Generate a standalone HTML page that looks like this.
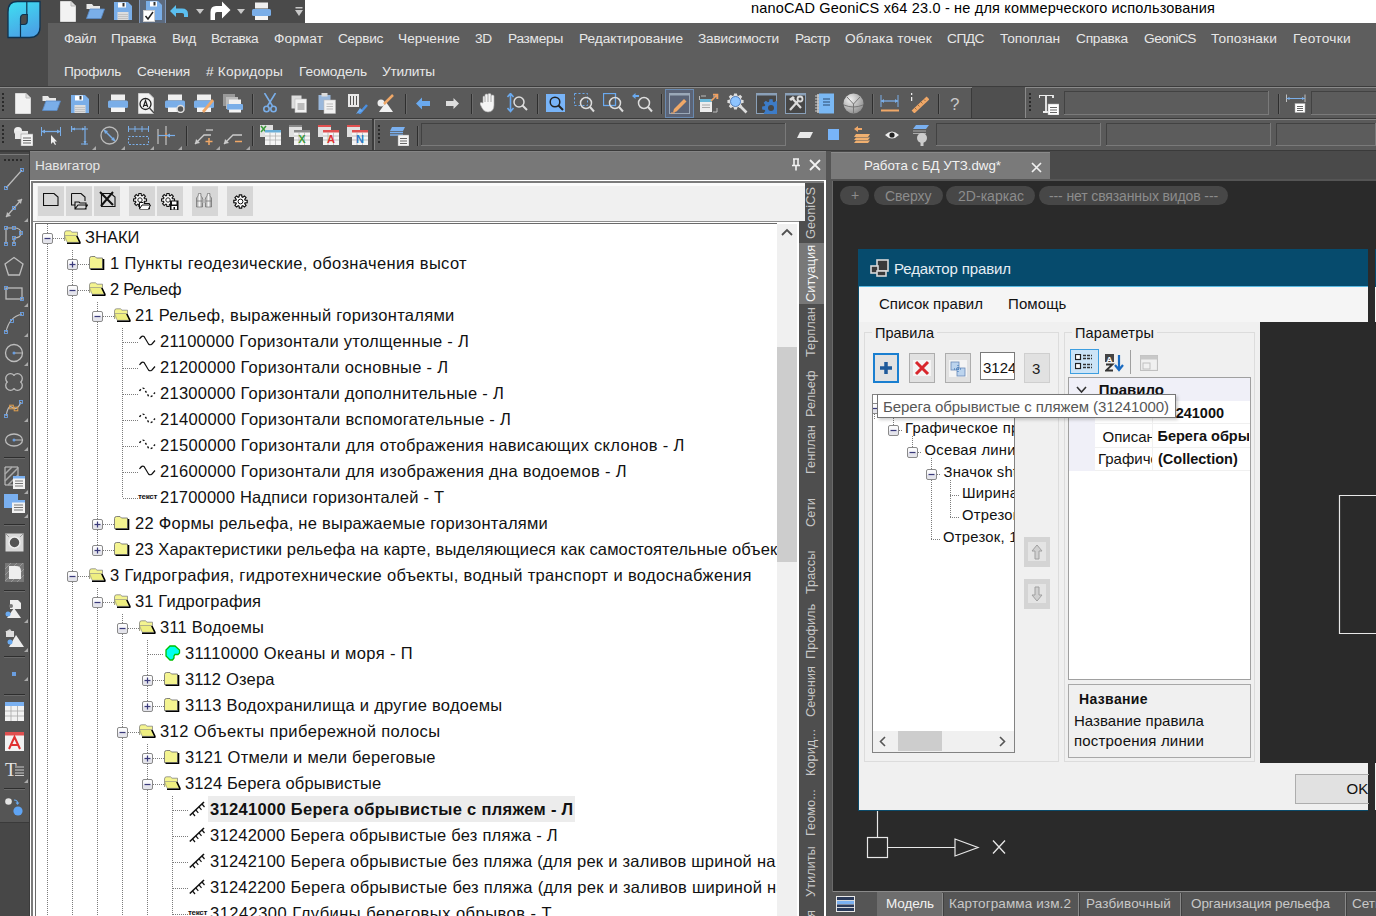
<!DOCTYPE html>
<html><head><meta charset="utf-8">
<style>
*{margin:0;padding:0;box-sizing:border-box}
body{width:1376px;height:916px;overflow:hidden;position:relative;background:#4a4a4a;font-family:'Liberation Sans',sans-serif}
.a{position:absolute}
.t{position:absolute;white-space:nowrap;line-height:1}
</style></head><body>
<div class="a" style="left:0px;top:0px;width:1376px;height:916px;background:#4a4a4a;"></div>
<div class="a" style="left:305px;top:0px;width:1071px;height:23px;background:#ffffff;"></div>
<div class="t" style="left:751px;top:0.53px;font-size:14.5px;color:#000;font-weight:normal;letter-spacing:0.179px;">nanoCAD GeoniCS x64 23.0 - не для коммерческого использования</div>
<svg class="a" style="left:7px;top:0px;" width="36" height="40" viewBox="0 0 36 40"><defs><linearGradient id="lg" x1="0" y1="0" x2="0.4" y2="1"><stop offset="0" stop-color="#3ee0f2"/><stop offset="1" stop-color="#4aa4e6"/></linearGradient></defs><path d="M1 12 Q1 1.5 10.5 1.5 H33 V27 Q33 37.5 22.5 37.5 H1 Z" fill="url(#lg)" stroke="#0e3350" stroke-width="1.3"/><path d="M19.8 1.5 V14.5 M13.5 24.5 V37.5" stroke="#0e3350" stroke-width="1.2"/><path d="M20.3 14.5 H16.8 Q13.5 14.5 13.5 18.5 V24.5 H17 Q20.3 24.5 20.3 20.5 Z" fill="#4b4b4b" stroke="#0e3350" stroke-width="1.2"/></svg>
<div class="a" style="left:48px;top:23px;width:1328px;height:63px;background:#5e5e5e;"></div>
<div class="a" style="left:0px;top:86px;width:1376px;height:1px;background:#3c3c3c;"></div>
<div class="t" style="left:64px;top:31.90px;font-size:13.7px;color:#e8e8e8;font-weight:normal;letter-spacing:-0.414px;">Файл</div>
<div class="t" style="left:111px;top:31.90px;font-size:13.7px;color:#e8e8e8;font-weight:normal;letter-spacing:-0.208px;">Правка</div>
<div class="t" style="left:172px;top:31.90px;font-size:13.7px;color:#e8e8e8;font-weight:normal;letter-spacing:-0.255px;">Вид</div>
<div class="t" style="left:211px;top:31.90px;font-size:13.7px;color:#e8e8e8;font-weight:normal;letter-spacing:-0.554px;">Вставка</div>
<div class="t" style="left:274px;top:31.90px;font-size:13.7px;color:#e8e8e8;font-weight:normal;letter-spacing:0.062px;">Формат</div>
<div class="t" style="left:338px;top:31.90px;font-size:13.7px;color:#e8e8e8;font-weight:normal;letter-spacing:-0.312px;">Сервис</div>
<div class="t" style="left:398px;top:31.90px;font-size:13.7px;color:#e8e8e8;font-weight:normal;letter-spacing:0.049px;">Черчение</div>
<div class="t" style="left:475px;top:31.90px;font-size:13.7px;color:#e8e8e8;font-weight:normal;letter-spacing:-0.250px;">3D</div>
<div class="t" style="left:508px;top:31.90px;font-size:13.7px;color:#e8e8e8;font-weight:normal;letter-spacing:-0.270px;">Размеры</div>
<div class="t" style="left:579px;top:31.90px;font-size:13.7px;color:#e8e8e8;font-weight:normal;letter-spacing:-0.020px;">Редактирование</div>
<div class="t" style="left:698px;top:31.90px;font-size:13.7px;color:#e8e8e8;font-weight:normal;letter-spacing:-0.189px;">Зависимости</div>
<div class="t" style="left:795px;top:31.90px;font-size:13.7px;color:#e8e8e8;font-weight:normal;letter-spacing:-0.403px;">Растр</div>
<div class="t" style="left:845px;top:31.90px;font-size:13.7px;color:#e8e8e8;font-weight:normal;letter-spacing:0.138px;">Облака точек</div>
<div class="t" style="left:947px;top:31.90px;font-size:13.7px;color:#e8e8e8;font-weight:normal;letter-spacing:-0.473px;">СПДС</div>
<div class="t" style="left:1000px;top:31.90px;font-size:13.7px;color:#e8e8e8;font-weight:normal;letter-spacing:-0.062px;">Топоплан</div>
<div class="t" style="left:1076px;top:31.90px;font-size:13.7px;color:#e8e8e8;font-weight:normal;letter-spacing:-0.243px;">Справка</div>
<div class="t" style="left:1144px;top:31.90px;font-size:13.7px;color:#e8e8e8;font-weight:normal;letter-spacing:-0.507px;">GeoniCS</div>
<div class="t" style="left:1211px;top:31.90px;font-size:13.7px;color:#e8e8e8;font-weight:normal;letter-spacing:0.127px;">Топознаки</div>
<div class="t" style="left:1293px;top:31.90px;font-size:13.7px;color:#e8e8e8;font-weight:normal;letter-spacing:0.297px;">Геоточки</div>
<div class="t" style="left:64px;top:64.70px;font-size:13.7px;color:#e8e8e8;font-weight:normal;letter-spacing:-0.299px;">Профиль</div>
<div class="t" style="left:137px;top:64.70px;font-size:13.7px;color:#e8e8e8;font-weight:normal;letter-spacing:-0.201px;">Сечения</div>
<div class="t" style="left:206px;top:64.70px;font-size:13.7px;color:#e8e8e8;font-weight:normal;letter-spacing:0.169px;"># Коридоры</div>
<div class="t" style="left:299px;top:64.70px;font-size:13.7px;color:#e8e8e8;font-weight:normal;letter-spacing:-0.080px;">Геомодель</div>
<div class="t" style="left:382px;top:64.70px;font-size:13.7px;color:#e8e8e8;font-weight:normal;letter-spacing:-0.194px;">Утилиты</div>
<svg class="a" style="left:60px;top:1px;" width="16" height="21" viewBox="0 0 16 21"><path d="M0.5 0.5 H11 L15.5 5 V20.5 H0.5 Z" fill="#f2f2f2" stroke="#d8d8d8"/><path d="M11 0.5 V5 H15.5" fill="#dcdcdc" stroke="#bbb"/></svg>
<svg class="a" style="left:86px;top:3px;" width="19" height="16" viewBox="0 0 19 16"><path d="M0.5 1 H6 L7.5 3 H14 V6 H0.5 Z" fill="#e8e8e8"/><path d="M4 6 H18.5 L15 15.5 H0.5 Z" fill="#7aaee8" stroke="#5a8cc8" stroke-width="0.8"/></svg>
<svg class="a" style="left:114px;top:2px;" width="18" height="18" viewBox="0 0 18 18"><path d="M0 0 H14 L18 4 V18 H0 Z" fill="#7aaee8"/><rect x="4" y="0.5" width="8" height="5" fill="#fff"/><rect x="8.5" y="1" width="2" height="3.5" fill="#333"/><rect x="3.5" y="10" width="11" height="8" fill="#ddd"/><path d="M4 12.5 H14 M4 14.5 H14 M4 16.5 H14" stroke="#bbb" stroke-width="0.8"/></svg>
<div class="a" style="left:139px;top:0px;width:27px;height:23px;background:#5c6a7e;"></div>
<div class="a" style="left:139px;top:0px;width:1px;height:23px;background:#7d95b8;"></div>
<div class="a" style="left:165px;top:0px;width:1px;height:23px;background:#7d95b8;"></div>
<svg class="a" style="left:143px;top:1px;" width="20" height="22" viewBox="0 0 20 22"><path d="M3 0 H15 L19 4 V19 H3 Z" fill="#7aaee8"/><rect x="7" y="0.5" width="7" height="5" fill="#fff"/><rect x="10.5" y="1" width="2" height="3.5" fill="#333"/><rect x="0.5" y="9.5" width="11" height="11" fill="#fff" stroke="#ccc"/><path d="M2.5 15 L5 18 L10 11" stroke="#222" stroke-width="1.5" fill="none"/></svg>
<svg class="a" style="left:170px;top:5px;" width="19" height="12" viewBox="0 0 19 12"><path d="M0 6 L6 0 V3.5 H12 Q18 3.5 18 9 V12 H14 V9.5 Q14 8 12 8 H6 V12 Z" fill="#5bbff0"/></svg>
<svg class="a" style="left:196px;top:9px;" width="8" height="5" viewBox="0 0 8 5"><path d="M0 0 H8 L4 5 Z" fill="#c8c8c8"/></svg>
<svg class="a" style="left:210px;top:1px;" width="21" height="20" viewBox="0 0 21 20"><path d="M20.5 9 L12 0.5 V5 H6 Q0.5 5 0.5 11 V19 H5 V13 Q5 11 7 11 H12 V17.5 Z" fill="#fff"/></svg>
<svg class="a" style="left:237px;top:9px;" width="8" height="5" viewBox="0 0 8 5"><path d="M0 0 H8 L4 5 Z" fill="#c8c8c8"/></svg>
<svg class="a" style="left:252px;top:2px;" width="19" height="19" viewBox="0 0 19 19"><rect x="3" y="0.5" width="13" height="6" fill="#efefef"/><rect x="0" y="7" width="19" height="7" rx="1.5" fill="#7aaee8"/><rect x="3" y="14" width="13" height="4" fill="#f4f4f4"/></svg>
<svg class="a" style="left:295px;top:7px;" width="8" height="10" viewBox="0 0 8 10"><rect x="0.5" y="0" width="7" height="1.5" fill="#c8c8c8"/><path d="M0 3 H8 L4 9 Z" fill="#c8c8c8"/></svg>
<div class="a" style="left:0px;top:87px;width:972px;height:31px;background:#5a5a5a;"></div>
<div class="a" style="left:0px;top:87px;width:972px;height:1px;background:#8a8a8a;"></div>
<div class="a" style="left:972px;top:87px;width:53px;height:31px;background:#4f4f4f;"></div>
<div class="a" style="left:971px;top:88px;width:1px;height:30px;background:#3a3a3a;"></div>
<div class="a" style="left:1025px;top:87px;width:351px;height:31px;background:#5a5a5a;"></div>
<div class="a" style="left:1025px;top:87px;width:351px;height:1px;background:#8a8a8a;"></div>
<div class="a" style="left:1025px;top:87px;width:1px;height:31px;background:#8a8a8a;"></div>
<div class="a" style="left:0px;top:118px;width:1376px;height:1px;background:#3a3a3a;"></div>
<div class="a" style="left:0px;top:119px;width:1376px;height:31px;background:#5a5a5a;"></div>
<div class="a" style="left:0px;top:119px;width:1376px;height:1px;background:#858585;"></div>
<div class="a" style="left:372px;top:119px;width:2px;height:31px;background:#3c3c3c;"></div>
<div class="a" style="left:374px;top:119px;width:1px;height:31px;background:#858585;"></div>
<div class="a" style="left:0px;top:150px;width:1376px;height:2px;background:#3a3a3a;"></div>
<div class="a" style="left:2px;top:93px;width:2px;height:2px;background:#2a2a2a"></div><div class="a" style="left:2px;top:97px;width:2px;height:2px;background:#2a2a2a"></div><div class="a" style="left:2px;top:101px;width:2px;height:2px;background:#2a2a2a"></div><div class="a" style="left:2px;top:105px;width:2px;height:2px;background:#2a2a2a"></div><div class="a" style="left:2px;top:109px;width:2px;height:2px;background:#2a2a2a"></div>
<div class="a" style="left:1029px;top:93px;width:2px;height:2px;background:#2a2a2a"></div><div class="a" style="left:1029px;top:97px;width:2px;height:2px;background:#2a2a2a"></div><div class="a" style="left:1029px;top:101px;width:2px;height:2px;background:#2a2a2a"></div><div class="a" style="left:1029px;top:105px;width:2px;height:2px;background:#2a2a2a"></div><div class="a" style="left:1029px;top:109px;width:2px;height:2px;background:#2a2a2a"></div>
<div class="a" style="left:2px;top:125px;width:2px;height:2px;background:#2a2a2a"></div><div class="a" style="left:2px;top:129px;width:2px;height:2px;background:#2a2a2a"></div><div class="a" style="left:2px;top:133px;width:2px;height:2px;background:#2a2a2a"></div><div class="a" style="left:2px;top:137px;width:2px;height:2px;background:#2a2a2a"></div><div class="a" style="left:2px;top:141px;width:2px;height:2px;background:#2a2a2a"></div>
<div class="a" style="left:378px;top:125px;width:2px;height:2px;background:#2a2a2a"></div><div class="a" style="left:378px;top:129px;width:2px;height:2px;background:#2a2a2a"></div><div class="a" style="left:378px;top:133px;width:2px;height:2px;background:#2a2a2a"></div><div class="a" style="left:378px;top:137px;width:2px;height:2px;background:#2a2a2a"></div><div class="a" style="left:378px;top:141px;width:2px;height:2px;background:#2a2a2a"></div>
<svg class="a" style="left:15px;top:93px;" width="16" height="21" viewBox="0 0 16 21"><path d="M0.5 0.5 H11 L15.5 5 V20.5 H0.5 Z" fill="#f2f2f2" stroke="#d8d8d8"/><path d="M11 0.5 V5 H15.5" fill="#dcdcdc" stroke="#bbb"/></svg>
<svg class="a" style="left:42px;top:95px;" width="19" height="16" viewBox="0 0 19 16"><path d="M0.5 1 H6 L7.5 3 H14 V6 H0.5 Z" fill="#e8e8e8"/><path d="M4 6 H18.5 L15 15.5 H0.5 Z" fill="#7aaee8" stroke="#5a8cc8" stroke-width="0.8"/></svg>
<svg class="a" style="left:71px;top:95px;" width="18" height="18" viewBox="0 0 18 18"><path d="M0 0 H14 L18 4 V18 H0 Z" fill="#7aaee8"/><rect x="4" y="0.5" width="8" height="5" fill="#fff"/><rect x="8.5" y="1" width="2" height="3.5" fill="#333"/><rect x="3.5" y="10" width="11" height="8" fill="#ddd"/><path d="M4 12.5 H14 M4 14.5 H14 M4 16.5 H14" stroke="#bbb" stroke-width="0.8"/></svg>
<div class="a" style="left:98px;top:94px;width:1px;height:20px;background:#2e2e2e;"></div>
<div class="a" style="left:99px;top:94px;width:1px;height:20px;background:#6a6a6a;"></div>
<svg class="a" style="left:108px;top:94px;" width="20" height="19" viewBox="0 0 20 19"><rect x="3" y="0.5" width="14" height="6" fill="#efefef"/><rect x="0" y="6.5" width="20" height="7.5" rx="1.5" fill="#7aaee8"/><rect x="3" y="13.5" width="14" height="4.5" fill="#f4f4f4"/></svg>
<svg class="a" style="left:138px;top:93px;" width="17" height="21" viewBox="0 0 17 21"><path d="M0.5 0.5 H11 L15.5 5 V20.5 H0.5 Z" fill="#f2f2f2" stroke="#ccc"/><circle cx="7.5" cy="11" r="5.5" fill="none" stroke="#222" stroke-width="1.3"/><path d="M5.3 14 L7.5 7.5 L9.7 14 M6 12.3 H9" stroke="#222" stroke-width="1.2" fill="none"/><path d="M11.5 15 L16 20" stroke="#444" stroke-width="1.3"/></svg>
<svg class="a" style="left:165px;top:94px;" width="20" height="19" viewBox="0 0 20 19"><rect x="3" y="0.5" width="14" height="6" fill="#efefef"/><rect x="0" y="6.5" width="20" height="7.5" rx="1.5" fill="#7aaee8"/><rect x="3" y="13.5" width="14" height="4.5" fill="#f4f4f4"/><circle cx="15.5" cy="15" r="3.5" fill="#555" stroke="#ddd" stroke-width="1.5"/></svg>
<svg class="a" style="left:194px;top:94px;" width="20" height="19" viewBox="0 0 20 19"><rect x="3" y="0.5" width="14" height="6" fill="#efefef"/><rect x="0" y="6.5" width="20" height="7.5" rx="1.5" fill="#7aaee8"/><rect x="3" y="13.5" width="14" height="4.5" fill="#f4f4f4"/><path d="M8 17 L18 5 L20 7 L10 19 Z" fill="#f0a868"/></svg>
<svg class="a" style="left:223px;top:94px;" width="20" height="20" viewBox="0 0 20 20"><rect x="0" y="0" width="12" height="12" fill="#999"/><rect x="3" y="3" width="12" height="12" fill="#bbb"/><rect x="6" y="5.5" width="12" height="5" fill="#efefef"/><rect x="4" y="10" width="16" height="6" rx="1" fill="#7aaee8"/><rect x="6" y="15.5" width="12" height="3" fill="#f4f4f4"/></svg>
<div class="a" style="left:252px;top:94px;width:1px;height:20px;background:#2e2e2e;"></div>
<div class="a" style="left:253px;top:94px;width:1px;height:20px;background:#6a6a6a;"></div>
<svg class="a" style="left:263px;top:93px;" width="14" height="20" viewBox="0 0 14 20"><path d="M1.5 0 L9.5 13 M12.5 0 L4.5 13" stroke="#7aaee8" stroke-width="1.6"/><circle cx="3.5" cy="16" r="2.7" fill="none" stroke="#7aaee8" stroke-width="1.6"/><circle cx="10.5" cy="16" r="2.7" fill="none" stroke="#7aaee8" stroke-width="1.6"/></svg>
<svg class="a" style="left:291px;top:95px;" width="16" height="18" viewBox="0 0 16 18"><rect x="0.5" y="0.5" width="10" height="13" fill="#ddd"/><rect x="4" y="4" width="11.5" height="13.5" fill="#f2f2f2" stroke="#bbb" stroke-width="0.6"/><rect x="6.5" y="8" width="7" height="7" fill="#bbb"/></svg>
<svg class="a" style="left:318px;top:93px;" width="18" height="21" viewBox="0 0 18 21"><rect x="0.5" y="2" width="12" height="15" fill="#9ab8dc"/><rect x="3.5" y="0" width="6" height="3.5" fill="#ddd"/><rect x="6" y="7" width="11.5" height="13.5" fill="#f2f2f2" stroke="#bbb" stroke-width="0.6"/><path d="M8.5 11 H15 M8.5 13.5 H15 M8.5 16 H15" stroke="#bbb"/></svg>
<svg class="a" style="left:348px;top:94px;" width="20" height="20" viewBox="0 0 20 20"><rect x="0" y="0" width="11" height="13" fill="#e8e8e8"/><path d="M2.5 2 V11 M5.5 2 V11 M8.5 2 V11" stroke="#555" stroke-width="1"/><path d="M11 20 L19 11" stroke="#4a8fe0" stroke-width="2.5"/><path d="M8 20 L12 14 L15 17 Z" fill="#6aaaf0"/></svg>
<svg class="a" style="left:377px;top:94px;" width="17" height="19" viewBox="0 0 17 19"><circle cx="4" cy="9" r="3.5" fill="#eee"/><path d="M2 18 L9 8 L16 18 Z" fill="#f2f2f2"/><path d="M7 10 L16 1" stroke="#f0a868" stroke-width="2.5"/></svg>
<div class="a" style="left:405px;top:94px;width:1px;height:20px;background:#2e2e2e;"></div>
<div class="a" style="left:406px;top:94px;width:1px;height:20px;background:#6a6a6a;"></div>
<svg class="a" style="left:416px;top:97px;" width="14" height="13" viewBox="0 0 14 13"><path d="M0 6.5 L6 0.5 V4 H14 V9 H6 V12.5 Z" fill="#6aaaf0"/></svg>
<svg class="a" style="left:446px;top:98px;" width="13" height="11" viewBox="0 0 13 11"><path d="M13 5.5 L7.5 0 V3 H0 V8 H7.5 V11 Z" fill="#ddd"/></svg>
<div class="a" style="left:471px;top:94px;width:1px;height:20px;background:#2e2e2e;"></div>
<div class="a" style="left:472px;top:94px;width:1px;height:20px;background:#6a6a6a;"></div>
<svg class="a" style="left:480px;top:93px;" width="17" height="20" viewBox="0 0 17 20"><path d="M3 10 V4 Q3 3 4 3 Q5 3 5 4 V9 V2 Q5 1 6.5 1 Q8 1 8 2 V9 V1.5 Q8 0.5 9.5 0.5 Q11 0.5 11 1.5 V9 V3 Q11 2 12.5 2 Q14 2 14 3 V12 Q14 19 8 19 Q4 19 2 15 L0 11 Q0 9 1.5 9.5 Z" fill="#f4f4f4" stroke="#aaa" stroke-width="0.6"/></svg>
<svg class="a" style="left:507px;top:93px;" width="21" height="20" viewBox="0 0 21 20"><path d="M3.5 1 V18 M0.5 4 L3.5 0.5 L6.5 4 M0.5 15 L3.5 18.5 L6.5 15" stroke="#6aaaf0" stroke-width="1.6" fill="none"/><circle cx="12" cy="9" r="5" fill="none" stroke="#ddd" stroke-width="1.5"/><path d="M15.5 12.5 L20 17" stroke="#ddd" stroke-width="2"/></svg>
<div class="a" style="left:537px;top:94px;width:1px;height:20px;background:#2e2e2e;"></div>
<div class="a" style="left:538px;top:94px;width:1px;height:20px;background:#6a6a6a;"></div>
<div class="a" style="left:546px;top:94px;width:19px;height:18px;background:#78b4f8;"></div>
<svg class="a" style="left:549px;top:96px;" width="15" height="15" viewBox="0 0 15 15"><circle cx="6" cy="6" r="4.8" fill="none" stroke="#222" stroke-width="1.5"/><path d="M9.5 9.5 L14 14" stroke="#222" stroke-width="2"/></svg>
<svg class="a" style="left:574px;top:93px;" width="21" height="21" viewBox="0 0 21 21"><rect x="0.5" y="0.5" width="13" height="12" fill="none" stroke="#6aaaf0" stroke-dasharray="2 2"/><circle cx="12" cy="10" r="5.5" fill="none" stroke="#ddd" stroke-width="1.5"/><path d="M16 14 L20 18.5" stroke="#ddd" stroke-width="2"/></svg>
<svg class="a" style="left:603px;top:93px;" width="21" height="21" viewBox="0 0 21 21"><rect x="0.5" y="0.5" width="12" height="12" fill="none" stroke="#6aaaf0" stroke-width="1.3"/><circle cx="12" cy="10" r="5.5" fill="none" stroke="#ddd" stroke-width="1.5"/><path d="M16 14 L20 18.5" stroke="#ddd" stroke-width="2"/></svg>
<svg class="a" style="left:632px;top:93px;" width="21" height="21" viewBox="0 0 21 21"><path d="M0 3 L3.5 0 V2 H7 V4 H3.5 V6 Z" fill="#6aaaf0"/><circle cx="12" cy="10" r="5.5" fill="none" stroke="#ddd" stroke-width="1.5"/><path d="M16 14 L20 18.5" stroke="#ddd" stroke-width="2"/></svg>
<div class="a" style="left:661px;top:94px;width:1px;height:20px;background:#2e2e2e;"></div>
<div class="a" style="left:662px;top:94px;width:1px;height:20px;background:#6a6a6a;"></div>
<div class="a" style="left:665px;top:89px;width:29px;height:29px;background:#5b6477;"></div>
<div class="a" style="left:665px;top:89px;width:29px;height:29px;border:1px solid #6a8ab0;"></div>
<svg class="a" style="left:668px;top:92px;" width="23" height="23" viewBox="0 0 23 23"><rect x="1.5" y="1.5" width="20" height="20" fill="none" stroke="#9aa8b8" stroke-width="1"/><rect x="1.5" y="1.5" width="20" height="2" fill="#9aa8b8"/><path d="M6 17 L16 7 L18.5 9.5 L8.5 19.5 L5 20.5 Z" fill="#f0a868"/><path d="M3 21 H7" stroke="#f0a868" stroke-width="1"/></svg>
<svg class="a" style="left:699px;top:93px;" width="20" height="21" viewBox="0 0 20 21"><path d="M2 3 H7 M0.5 3 V7 M14 3 H18 V6 M18 15 V19 H14" stroke="#bbb" stroke-width="1" fill="none"/><rect x="1" y="6" width="12" height="13" fill="#ededed"/><rect x="1" y="6" width="12" height="3" fill="#6ab8d8"/><path d="M3 12 H11 M3 14.5 H11" stroke="#aaa" stroke-width="1.2"/><path d="M12 8 L18 2 M14 1.5 H18.5 V6" stroke="#f0a060" stroke-width="1.6" fill="none"/></svg>
<svg class="a" style="left:727px;top:93px;" width="21" height="21" viewBox="0 0 21 21"><path d="M14.42,6.67 L16.58,7.11 L16.58,9.89 L14.42,10.33 L13.98,11.39 L15.20,13.23 L13.23,15.20 L11.39,13.98 L10.33,14.42 L9.89,16.58 L7.11,16.58 L6.67,14.42 L5.61,13.98 L3.77,15.20 L1.80,13.23 L3.02,11.39 L2.58,10.33 L0.42,9.89 L0.42,7.11 L2.58,6.67 L3.02,5.61 L1.80,3.77 L3.77,1.80 L5.61,3.02 L6.67,2.58 L7.11,0.42 L9.89,0.42 L10.33,2.58 L11.39,3.02 L13.23,1.80 L15.20,3.77 L13.98,5.61 Z" fill="#ddd"/><circle cx="8.5" cy="8.5" r="5" fill="#8ec4ff" stroke="#3a6ab0" stroke-width="0.8"/><path d="M13 13 L19.5 19.5" stroke="#ddd" stroke-width="2.6"/></svg>
<svg class="a" style="left:756px;top:93px;" width="21" height="21" viewBox="0 0 21 21"><rect x="0.5" y="0.5" width="20" height="20" fill="#474747" stroke="#8aa0b8" stroke-width="1"/><rect x="0.5" y="0.5" width="20" height="2" fill="#8aa0b8"/><path d="M21.21,13.08 L23.87,13.48 L23.87,16.52 L21.21,16.92 L20.75,18.03 L22.35,20.20 L20.20,22.35 L18.03,20.75 L16.92,21.21 L16.52,23.87 L13.48,23.87 L13.08,21.21 L11.97,20.75 L9.80,22.35 L7.65,20.20 L9.25,18.03 L8.79,16.92 L6.13,16.52 L6.13,13.48 L8.79,13.08 L9.25,11.97 L7.65,9.80 L9.80,7.65 L11.97,9.25 L13.08,8.79 L13.48,6.13 L16.52,6.13 L16.92,8.79 L18.03,9.25 L20.20,7.65 L22.35,9.80 L20.75,11.97 Z" fill="#3d7cc8"/><circle cx="15" cy="15" r="3" fill="#474747"/></svg>
<svg class="a" style="left:785px;top:93px;" width="21" height="21" viewBox="0 0 21 21"><rect x="0.5" y="0.5" width="20" height="20" fill="#474747" stroke="#8aa0b8" stroke-width="1"/><rect x="0.5" y="0.5" width="20" height="2" fill="#8aa0b8"/><path d="M5 17 L14 7 M7 5 L16 15" stroke="#ddd" stroke-width="2.2"/><path d="M4 6 L8 3 L10 5 L6 8 Z" fill="#ddd"/><circle cx="15" cy="6" r="2.5" fill="none" stroke="#ddd" stroke-width="1.8"/></svg>
<svg class="a" style="left:815px;top:93px;" width="19" height="21" viewBox="0 0 19 21"><rect x="4" y="0.5" width="15" height="20" fill="#7ab8f4"/><path d="M8 6 H15 M8 9 H15 M8 12 H15" stroke="#2a4a70" stroke-width="1.1"/><path d="M3 1 V20" stroke="#eee" stroke-width="1.2"/><path d="M0 3 H4 M0 6 H4 M0 9 H4 M0 12 H4 M0 15 H4 M0 18 H4" stroke="#ccc"/></svg>
<svg class="a" style="left:843px;top:93px;" width="21" height="21" viewBox="0 0 21 21"><defs><radialGradient id="sph" cx="0.35" cy="0.3" r="0.8"><stop offset="0" stop-color="#f0f0f0"/><stop offset="1" stop-color="#888"/></radialGradient></defs><circle cx="10.5" cy="10.5" r="10" fill="url(#sph)"/><path d="M4 4 L10.5 11 L17 4 M10.5 11 V20.5 M1 12 Q10.5 16 20 12" stroke="#777" stroke-width="1" fill="none"/></svg>
<div class="a" style="left:872px;top:94px;width:1px;height:20px;background:#2e2e2e;"></div>
<div class="a" style="left:873px;top:94px;width:1px;height:20px;background:#6a6a6a;"></div>
<svg class="a" style="left:880px;top:95px;" width="19" height="17" viewBox="0 0 19 17"><path d="M1 0 V12 M18 0 V12" stroke="#7aaee8" stroke-width="1"/><path d="M1 6 H18" stroke="#7aaee8" stroke-width="1.3"/><path d="M1 6 L4 4 V8 Z M18 6 L15 4 V8 Z" fill="#7aaee8"/><rect x="1" y="14.5" width="18" height="2" fill="#f0a868"/></svg>
<svg class="a" style="left:911px;top:93px;" width="18" height="20" viewBox="0 0 18 20"><path d="M0.5 0 V2 M0.5 4 V8" stroke="#eee" stroke-width="1.5"/><path d="M2 19 L17 5" stroke="#f0a868" stroke-width="4"/><path d="M4 15 L5.5 16.5 M7 12 L8.5 13.5 M10 9 L11.5 10.5 M13 6.5 L14.5 8" stroke="#8a6030" stroke-width="0.8"/></svg>
<div class="a" style="left:938px;top:94px;width:1px;height:20px;background:#2e2e2e;"></div>
<div class="a" style="left:939px;top:94px;width:1px;height:20px;background:#6a6a6a;"></div>
<div class="t" style="left:950px;top:96.11px;font-size:17px;color:#c8c8c8;font-weight:normal;">?</div>
<svg class="a" style="left:1039px;top:95px;" width="20" height="20" viewBox="0 0 20 20"><path d="M0 0 H14 M7 0 V17 M4 17 H10 M0 0 V3 M14 0 V3" stroke="#eee" stroke-width="1.8" fill="none"/><rect x="9" y="9" width="11" height="11" fill="#fff" stroke="#aaa" stroke-width="0.5"/><path d="M11 12.5 H18 M11 15 H18 M11 17.5 H18" stroke="#666"/></svg>
<div class="a" style="left:1064px;top:91px;width:205px;height:24px;background:#5c5c5c;"></div>
<div class="a" style="left:1064px;top:91px;width:205px;height:1px;background:#424242;"></div>
<div class="a" style="left:1064px;top:91px;width:1px;height:24px;background:#424242;"></div>
<div class="a" style="left:1064px;top:114px;width:205px;height:1px;background:#7a7a7a;"></div>
<div class="a" style="left:1268px;top:91px;width:1px;height:24px;background:#7a7a7a;"></div>
<div class="a" style="left:1278px;top:94px;width:1px;height:20px;background:#2e2e2e;"></div>
<div class="a" style="left:1279px;top:94px;width:1px;height:20px;background:#6a6a6a;"></div>
<svg class="a" style="left:1285px;top:94px;" width="22" height="20" viewBox="0 0 22 20"><path d="M1.5 0.5 V8 M20 0.5 V8" stroke="#ccc" stroke-width="0.9"/><path d="M1.5 4.5 H20" stroke="#7aaee8" stroke-width="1"/><path d="M1.5 4.5 L4.5 3 V6 Z M20 4.5 L17 3 V6 Z" fill="#7aaee8"/><rect x="10" y="9.5" width="10" height="9" fill="#fff" stroke="#aaa" stroke-width="0.5"/><path d="M12 12.5 H18 M12 14.5 H18 M12 16.5 H18" stroke="#666"/></svg>
<div class="a" style="left:1311px;top:91px;width:65px;height:24px;background:#5c5c5c;"></div>
<div class="a" style="left:1311px;top:91px;width:65px;height:1px;background:#424242;"></div>
<div class="a" style="left:1311px;top:91px;width:1px;height:24px;background:#424242;"></div>
<div class="a" style="left:1311px;top:114px;width:65px;height:1px;background:#7a7a7a;"></div>
<svg class="a" style="left:13px;top:126px;" width="20" height="20" viewBox="0 0 20 20"><circle cx="5" cy="5" r="4" fill="#eee"/><rect x="2" y="5" width="13" height="8" fill="#e8e8e8"/><rect x="8" y="8" width="12" height="12" fill="#f4f4f4" stroke="#999" stroke-width="0.6"/><path d="M10 12 H18 M10 14.5 H18 M10 17 H18" stroke="#666"/></svg>
<svg class="a" style="left:41px;top:127px;" width="20" height="18" viewBox="0 0 20 18"><path d="M0.5 0 V9 M19.5 0 V9" stroke="#7aaee8"/><path d="M0.5 4.5 H19.5" stroke="#7aaee8" stroke-width="1.3"/><path d="M0.5 4.5 L4 2.5 V6.5 Z M19.5 4.5 L16 2.5 V6.5 Z" fill="#7aaee8"/><path d="M10 8 V17 L12 15 L14 18 L15 17.5 L13.5 14.5 L16 14.5 Z" fill="#eee"/></svg>
<svg class="a" style="left:71px;top:126px;" width="18" height="19" viewBox="0 0 18 19"><path d="M0.5 0 V6 M0.5 3 H14 M14 0 V19 M10 3 H17 M10 18 H17" stroke="#7aaee8" stroke-width="1.2" fill="none"/><path d="M0.5 3 L4 1.5 V4.5 Z M14 3 L11 1.5 V4.5 Z M14 18 L12.5 15 H15.5 Z" fill="#7aaee8"/></svg>
<svg class="a" style="left:92px;top:146px;" width="4" height="4" viewBox="0 0 4 4"><path d="M4 0 V4 H0 Z" fill="#aaa"/></svg>
<svg class="a" style="left:100px;top:126px;" width="19" height="19" viewBox="0 0 19 19"><circle cx="9.5" cy="9.5" r="8.5" fill="none" stroke="#bbb" stroke-width="1.3"/><path d="M4 4 L15 15" stroke="#7aaee8" stroke-width="1.4"/><path d="M4 4 L8 5 L5 8 Z M15 15 L11 14 L14 11 Z" fill="#7aaee8"/></svg>
<svg class="a" style="left:121px;top:146px;" width="4" height="4" viewBox="0 0 4 4"><path d="M4 0 V4 H0 Z" fill="#aaa"/></svg>
<svg class="a" style="left:128px;top:126px;" width="21" height="19" viewBox="0 0 21 19"><path d="M0.5 0 V6 M20.5 0 V6 M7 0 V6 M14 0 V6 M0.5 3 H20.5" stroke="#7aaee8" stroke-width="1"/><rect x="0.5" y="10.5" width="20" height="8" fill="none" stroke="#7aaee8" stroke-dasharray="2 1.5"/></svg>
<svg class="a" style="left:150px;top:146px;" width="4" height="4" viewBox="0 0 4 4"><path d="M4 0 V4 H0 Z" fill="#aaa"/></svg>
<svg class="a" style="left:157px;top:126px;" width="19" height="19" viewBox="0 0 19 19"><path d="M1 3 V18 M9 0 V7 M9 12 V19" stroke="#bbb" stroke-width="1.3"/><path d="M9 7 V12" stroke="#f0a868" stroke-width="1.5"/><path d="M1 9.5 H18" stroke="#7aaee8" stroke-width="1.2"/><path d="M9 9.5 L13 7.5 V11.5 Z" fill="#7aaee8"/></svg>
<svg class="a" style="left:178px;top:146px;" width="4" height="4" viewBox="0 0 4 4"><path d="M4 0 V4 H0 Z" fill="#aaa"/></svg>
<div class="a" style="left:186px;top:126px;width:1px;height:20px;background:#2e2e2e;"></div>
<div class="a" style="left:187px;top:126px;width:1px;height:20px;background:#6a6a6a;"></div>
<svg class="a" style="left:194px;top:126px;" width="20" height="19" viewBox="0 0 20 19"><path d="M1 18 L10 9 H17" stroke="#ccc" stroke-width="1.3" fill="none"/><path d="M12 4 H19" stroke="#bbb" stroke-width="1.5"/><path d="M1 18 L2 13 L6 17 Z" fill="#ccc"/><path d="M15 12 V19 M11.5 15.5 H18.5" stroke="#f0a868" stroke-width="1.5"/></svg>
<svg class="a" style="left:216px;top:146px;" width="4" height="4" viewBox="0 0 4 4"><path d="M4 0 V4 H0 Z" fill="#aaa"/></svg>
<svg class="a" style="left:223px;top:126px;" width="20" height="19" viewBox="0 0 20 19"><path d="M1 18 L10 9 H19" stroke="#ccc" stroke-width="1.3" fill="none"/><path d="M1 18 L2 13 L6 17 Z" fill="#ccc"/><path d="M12 15.5 H19" stroke="#f0a868" stroke-width="1.5"/></svg>
<svg class="a" style="left:246px;top:146px;" width="4" height="4" viewBox="0 0 4 4"><path d="M4 0 V4 H0 Z" fill="#aaa"/></svg>
<div class="a" style="left:252px;top:126px;width:1px;height:20px;background:#2e2e2e;"></div>
<div class="a" style="left:253px;top:126px;width:1px;height:20px;background:#6a6a6a;"></div>
<svg class="a" style="left:260px;top:125px;" width="21" height="20" viewBox="0 0 21 20"><rect x="0" y="0" width="13" height="12" fill="#e0e0e0"/><path d="M1 1 L6 7 M6 1 L1 7" stroke="#3a9a3a" stroke-width="1.5"/><rect x="5" y="5" width="16" height="15" fill="#f4f4f4"/><rect x="5" y="5" width="16" height="2.5" fill="#6aaed8"/><path d="M5 11 H21 M5 15 H21 M10 7.5 V20 M15.5 7.5 V20" stroke="#aaa" stroke-width="0.7"/></svg>
<svg class="a" style="left:289px;top:125px;" width="21" height="20" viewBox="0 0 21 20"><rect x="0" y="0" width="13" height="12" fill="#e0e0e0"/><rect x="0" y="0" width="13" height="2" fill="#888"/><rect x="5" y="5" width="16" height="15" fill="#f4f4f4"/><rect x="5" y="5" width="16" height="2.5" fill="#888"/><path d="M5 11 H21 M5 15 H21 M10 7.5 V20 M15.5 7.5 V20" stroke="#aaa" stroke-width="0.7"/><text x="13" y="18" font-family="Liberation Sans" font-weight="bold" font-size="11" fill="#3a9a3a" text-anchor="middle">X</text></svg>
<svg class="a" style="left:318px;top:125px;" width="21" height="20" viewBox="0 0 21 20"><rect x="0" y="0" width="13" height="12" fill="#e0e0e0"/><rect x="0" y="0" width="13" height="2" fill="#e05050"/><rect x="5" y="5" width="16" height="15" fill="#f4f4f4"/><rect x="5" y="5" width="16" height="2.5" fill="#e05050"/><path d="M5 11 H21 M5 15 H21 M10 7.5 V20 M15.5 7.5 V20" stroke="#aaa" stroke-width="0.7"/><text x="13" y="18" font-family="Liberation Sans" font-weight="bold" font-size="11" fill="#e03030" text-anchor="middle">A</text></svg>
<svg class="a" style="left:347px;top:125px;" width="21" height="20" viewBox="0 0 21 20"><rect x="0" y="0" width="13" height="12" fill="#e0e0e0"/><rect x="0" y="0" width="13" height="2" fill="#e05050"/><rect x="5" y="5" width="16" height="15" fill="#f4f4f4"/><rect x="5" y="5" width="16" height="2.5" fill="#e05050"/><path d="M5 11 H21 M5 15 H21 M10 7.5 V20 M15.5 7.5 V20" stroke="#aaa" stroke-width="0.7"/><text x="13" y="18" font-family="Liberation Sans" font-weight="bold" font-size="11" fill="#2a7ac8" text-anchor="middle">N</text></svg>
<svg class="a" style="left:389px;top:125px;" width="20" height="21" viewBox="0 0 20 21"><path d="M3 2 L16 2 L14 6 L1 6 Z" fill="#7ab0f0"/><path d="M1 7.5 H14 M1 10 H14" stroke="#7ab0f0" stroke-width="1.3"/><rect x="9" y="10" width="11" height="11" fill="#f4f4f4" stroke="#999" stroke-width="0.5"/><path d="M11 13.5 H18 M11 16 H18 M11 18.5 H18" stroke="#666"/></svg>
<div class="a" style="left:417px;top:126px;width:1px;height:20px;background:#2e2e2e;"></div>
<div class="a" style="left:418px;top:126px;width:1px;height:20px;background:#6a6a6a;"></div>
<div class="a" style="left:421px;top:123px;width:365px;height:23px;background:#5c5c5c;"></div>
<div class="a" style="left:421px;top:123px;width:365px;height:1px;background:#424242;"></div>
<div class="a" style="left:421px;top:123px;width:1px;height:23px;background:#424242;"></div>
<div class="a" style="left:421px;top:145px;width:365px;height:1px;background:#7a7a7a;"></div>
<div class="a" style="left:785px;top:123px;width:1px;height:23px;background:#7a7a7a;"></div>
<svg class="a" style="left:797px;top:132px;" width="16" height="6" viewBox="0 0 16 6"><path d="M3 0 H16 L13 6 H0 Z" fill="#e8e8e8"/></svg>
<div class="a" style="left:828px;top:129px;width:11px;height:11px;background:#78b4f8;"></div>
<svg class="a" style="left:854px;top:126px;" width="17" height="17" viewBox="0 0 17 17"><path d="M0 3 L4 0 V2 H8 V4 H4 V6 Z" fill="#f0a868"/><path d="M2 8 H16 L14 11 H0 Z M2 11.5 H16 L14 14 H0 Z M2 14.5 H16 L14 17 H0 Z" fill="#f0b070"/></svg>
<svg class="a" style="left:885px;top:131px;" width="14" height="8" viewBox="0 0 14 8"><path d="M0 4 Q7 -3 14 4 Q7 11 0 4 Z" fill="#eee"/><circle cx="7" cy="4" r="2.6" fill="#222"/></svg>
<svg class="a" style="left:913px;top:125px;" width="16" height="21" viewBox="0 0 16 21"><path d="M3 0 H16 L13 4 H0 Z" fill="#7ab0f0"/><path d="M0 6 H13 M0 8.5 H13" stroke="#aaa" stroke-width="1.2"/><circle cx="9" cy="13" r="5" fill="#ccc"/><rect x="7.5" y="17" width="3" height="4" fill="#ccc"/></svg>
<div class="a" style="left:936px;top:123px;width:165px;height:23px;background:#5c5c5c;"></div>
<div class="a" style="left:936px;top:123px;width:165px;height:1px;background:#424242;"></div>
<div class="a" style="left:936px;top:123px;width:1px;height:23px;background:#424242;"></div>
<div class="a" style="left:936px;top:145px;width:165px;height:1px;background:#7a7a7a;"></div>
<div class="a" style="left:1100px;top:123px;width:1px;height:23px;background:#7a7a7a;"></div>
<div class="a" style="left:1106px;top:123px;width:165px;height:23px;background:#5c5c5c;"></div>
<div class="a" style="left:1106px;top:123px;width:165px;height:1px;background:#424242;"></div>
<div class="a" style="left:1106px;top:123px;width:1px;height:23px;background:#424242;"></div>
<div class="a" style="left:1106px;top:145px;width:165px;height:1px;background:#7a7a7a;"></div>
<div class="a" style="left:1270px;top:123px;width:1px;height:23px;background:#7a7a7a;"></div>
<div class="a" style="left:1276px;top:123px;width:100px;height:23px;background:#5c5c5c;"></div>
<div class="a" style="left:1276px;top:123px;width:100px;height:1px;background:#424242;"></div>
<div class="a" style="left:1276px;top:123px;width:1px;height:23px;background:#424242;"></div>
<div class="a" style="left:1276px;top:145px;width:100px;height:1px;background:#7a7a7a;"></div>
<div class="a" style="left:1375px;top:123px;width:1px;height:23px;background:#7a7a7a;"></div>
<div class="a" style="left:0px;top:152px;width:29px;height:764px;background:#474747;"></div>
<div class="a" style="left:0px;top:154px;width:29px;height:669px;background:#555555;"></div>
<div class="a" style="left:0px;top:154px;width:29px;height:1px;background:#7a7a7a;"></div>
<div class="a" style="left:29px;top:152px;width:1px;height:764px;background:#3a3a3a;"></div>
<div class="a" style="left:4px;top:159px;width:2px;height:2px;background:#2a2a2a"></div><div class="a" style="left:8px;top:159px;width:2px;height:2px;background:#2a2a2a"></div><div class="a" style="left:12px;top:159px;width:2px;height:2px;background:#2a2a2a"></div><div class="a" style="left:16px;top:159px;width:2px;height:2px;background:#2a2a2a"></div><div class="a" style="left:20px;top:159px;width:2px;height:2px;background:#2a2a2a"></div>
<svg class="a" style="left:4px;top:168px;" width="20" height="22" viewBox="0 0 20 22"><path d="M2 20 L18 2" stroke="#bdbdbd" stroke-width="1.2"/><rect x="0.5" y="18.5" width="3" height="3" fill="none" stroke="#6a9ee0" stroke-width="0.9"/><rect x="16.5" y="0.5" width="3" height="3" fill="none" stroke="#6a9ee0" stroke-width="0.9"/></svg>
<svg class="a" style="left:4px;top:197px;" width="20" height="22" viewBox="0 0 20 22"><path d="M2 20 L18 2" stroke="#bdbdbd" stroke-width="1.2"/><path d="M2 20 L3 15 L7 19 Z M18 2 L13 3 L17 7 Z" fill="#bdbdbd"/><rect x="8.5" y="9.5" width="3" height="3" fill="none" stroke="#6a9ee0" stroke-width="0.9"/></svg>
<svg class="a" style="left:24px;top:218px;" width="4" height="4" viewBox="0 0 4 4"><path d="M4 0 V4 H0 Z" fill="#aaa"/></svg>
<svg class="a" style="left:4px;top:225px;" width="20" height="22" viewBox="0 0 20 22"><path d="M2 3 V19 M2 3 H10 Q17 3 17 8 Q17 13 10 13 V19" stroke="#bdbdbd" stroke-width="1.2" fill="none"/><rect x="0.5" y="1.5" width="3" height="3" fill="none" stroke="#6a9ee0" stroke-width="0.9"/><rect x="8.5" y="1.5" width="3" height="3" fill="none" stroke="#6a9ee0" stroke-width="0.9"/><rect x="15.5" y="6.5" width="3" height="3" fill="none" stroke="#6a9ee0" stroke-width="0.9"/><rect x="8.5" y="11.5" width="3" height="3" fill="none" stroke="#6a9ee0" stroke-width="0.9"/><rect x="0.5" y="17.5" width="3" height="3" fill="none" stroke="#6a9ee0" stroke-width="0.9"/><rect x="8.5" y="17.5" width="3" height="3" fill="none" stroke="#6a9ee0" stroke-width="0.9"/></svg>
<svg class="a" style="left:4px;top:256px;" width="20" height="21" viewBox="0 0 20 21"><path d="M10 1.5 L19 8 L15.5 19 H4.5 L1 8 Z" fill="none" stroke="#bdbdbd" stroke-width="1.3"/></svg>
<svg class="a" style="left:4px;top:286px;" width="20" height="16" viewBox="0 0 20 16"><rect x="2" y="2" width="16" height="11" fill="none" stroke="#bdbdbd" stroke-width="1.3"/><rect x="0.5" y="0.5" width="3" height="3" fill="none" stroke="#6a9ee0" stroke-width="0.9"/><rect x="16.5" y="11.5" width="3" height="3" fill="none" stroke="#6a9ee0" stroke-width="0.9"/></svg>
<svg class="a" style="left:24px;top:303px;" width="4" height="4" viewBox="0 0 4 4"><path d="M4 0 V4 H0 Z" fill="#aaa"/></svg>
<svg class="a" style="left:4px;top:312px;" width="20" height="22" viewBox="0 0 20 22"><path d="M2 20 Q5 5 18 2" stroke="#bdbdbd" stroke-width="1.2" fill="none"/><rect x="0.5" y="18.5" width="3" height="3" fill="none" stroke="#6a9ee0" stroke-width="0.9"/><rect x="6.5" y="7.5" width="3" height="3" fill="none" stroke="#6a9ee0" stroke-width="0.9"/><rect x="16.5" y="0.5" width="3" height="3" fill="none" stroke="#6a9ee0" stroke-width="0.9"/></svg>
<svg class="a" style="left:24px;top:333px;" width="4" height="4" viewBox="0 0 4 4"><path d="M4 0 V4 H0 Z" fill="#aaa"/></svg>
<svg class="a" style="left:4px;top:343px;" width="20" height="20" viewBox="0 0 20 20"><circle cx="10" cy="10" r="8.5" fill="none" stroke="#bdbdbd" stroke-width="1.3"/><path d="M10 10 H18" stroke="#bdbdbd"/><circle cx="10" cy="10" r="1.5" fill="#6a9ee0"/></svg>
<svg class="a" style="left:24px;top:362px;" width="4" height="4" viewBox="0 0 4 4"><path d="M4 0 V4 H0 Z" fill="#aaa"/></svg>
<svg class="a" style="left:4px;top:372px;" width="20" height="20" viewBox="0 0 20 20"><g fill="none" stroke="#bdbdbd" stroke-width="1.3"><circle cx="6.5" cy="6.5" r="4.8"/><circle cx="13.5" cy="6.5" r="4.8"/><circle cx="13.5" cy="13.5" r="4.8"/><circle cx="6.5" cy="13.5" r="4.8"/></g><circle cx="10" cy="10" r="6.3" fill="#555"/></svg>
<svg class="a" style="left:4px;top:399px;" width="20" height="19" viewBox="0 0 20 19"><path d="M2 17 Q4 6 7.5 8 Q10 10 12 9.5 Q15 8 17 3" stroke="#bdbdbd" stroke-width="1.2" fill="none"/><rect x="0.5" y="15.5" width="3" height="3" fill="none" stroke="#6a9ee0" stroke-width="0.9"/><rect x="15.5" y="1.5" width="3" height="3" fill="none" stroke="#6a9ee0" stroke-width="0.9"/><rect x="5.7" y="6.2" width="3.6" height="3.6" fill="none" stroke="#e0a050"/><rect x="10.2" y="8.2" width="3.6" height="3.6" fill="none" stroke="#e0a050"/></svg>
<svg class="a" style="left:24px;top:418px;" width="4" height="4" viewBox="0 0 4 4"><path d="M4 0 V4 H0 Z" fill="#aaa"/></svg>
<svg class="a" style="left:4px;top:432px;" width="20" height="16" viewBox="0 0 20 16"><ellipse cx="10" cy="8" rx="8.5" ry="6" fill="none" stroke="#bdbdbd" stroke-width="1.3"/><path d="M10 8 H18" stroke="#bdbdbd"/><circle cx="10" cy="8" r="1.5" fill="#6a9ee0"/></svg>
<svg class="a" style="left:24px;top:447px;" width="4" height="4" viewBox="0 0 4 4"><path d="M4 0 V4 H0 Z" fill="#aaa"/></svg>
<div class="a" style="left:4px;top:457px;width:21px;height:1px;background:#2e2e2e;"></div>
<div class="a" style="left:4px;top:458px;width:21px;height:1px;background:#6a6a6a;"></div>
<svg class="a" style="left:4px;top:466px;" width="21" height="24" viewBox="0 0 21 24"><path d="M1 1 H14 V19 H1 Z" fill="none" stroke="#ccc"/><path d="M1 8 L8 1 M1 15 L14 2 M4 19 L14 9" stroke="#aaa" stroke-width="1.5"/><rect x="9" y="10" width="12" height="13" fill="#f2f2f2"/><rect x="9" y="10" width="12" height="2.5" fill="#7ab0f0"/><path d="M11 15 H19 M11 17.5 H19 M11 20 H19" stroke="#777"/></svg>
<svg class="a" style="left:24px;top:490px;" width="4" height="4" viewBox="0 0 4 4"><path d="M4 0 V4 H0 Z" fill="#aaa"/></svg>
<svg class="a" style="left:4px;top:494px;" width="21" height="20" viewBox="0 0 21 20"><rect x="0" y="0" width="14" height="14" fill="#7ab0f0"/><rect x="8" y="6" width="13" height="13" fill="#f2f2f2"/><rect x="8" y="6" width="13" height="2.5" fill="#7ab0f0"/><path d="M10 11 H19 M10 13.5 H19 M10 16 H19" stroke="#777"/></svg>
<svg class="a" style="left:24px;top:514px;" width="4" height="4" viewBox="0 0 4 4"><path d="M4 0 V4 H0 Z" fill="#aaa"/></svg>
<div class="a" style="left:4px;top:524px;width:21px;height:1px;background:#2e2e2e;"></div>
<div class="a" style="left:4px;top:525px;width:21px;height:1px;background:#6a6a6a;"></div>
<svg class="a" style="left:5px;top:533px;" width="19" height="19" viewBox="0 0 19 19"><rect x="0.5" y="0.5" width="18" height="18" fill="#d8d8d8"/><path d="M0.5 0.5 L4 4 M18.5 0.5 L15 4" stroke="#999"/><circle cx="9.5" cy="9.5" r="5.5" fill="#555" stroke="#eee" stroke-width="1.5"/></svg>
<svg class="a" style="left:5px;top:563px;" width="19" height="19" viewBox="0 0 19 19"><rect x="0" y="0" width="19" height="19" fill="#777"/><path d="M0 6 L6 0 M0 12 L12 0 M0 18 L18 0 M6 19 L19 6 M12 19 L19 12" stroke="#999"/><path d="M4 3 H11 Q16 3 16 8 V16 H4 Z" fill="#eee"/></svg>
<div class="a" style="left:4px;top:590px;width:21px;height:1px;background:#2e2e2e;"></div>
<div class="a" style="left:4px;top:591px;width:21px;height:1px;background:#6a6a6a;"></div>
<svg class="a" style="left:4px;top:599px;" width="21" height="20" viewBox="0 0 21 20"><path d="M6 1 H14 L17 4 V10 H6 Z" fill="#eee"/><path d="M3 19 L10 9 L17 19 Z" fill="#eee"/><circle cx="4" cy="15" r="2.5" fill="#6aaaf0"/><circle cx="7" cy="7" r="2" fill="#777"/></svg>
<svg class="a" style="left:24px;top:619px;" width="4" height="4" viewBox="0 0 4 4"><path d="M4 0 V4 H0 Z" fill="#aaa"/></svg>
<svg class="a" style="left:4px;top:629px;" width="21" height="19" viewBox="0 0 21 19"><path d="M1 3 L6 0 L9 4 Z" fill="#ccc"/><path d="M5 18 L12 6 L20 18 Z" fill="#eee"/><circle cx="6" cy="13" r="2.5" fill="#6aaaf0"/><rect x="2" y="2" width="8" height="6" fill="#ddd"/></svg>
<svg class="a" style="left:24px;top:648px;" width="4" height="4" viewBox="0 0 4 4"><path d="M4 0 V4 H0 Z" fill="#aaa"/></svg>
<div class="a" style="left:4px;top:656px;width:21px;height:1px;background:#2e2e2e;"></div>
<div class="a" style="left:4px;top:657px;width:21px;height:1px;background:#6a6a6a;"></div>
<div class="a" style="left:12px;top:672px;width:4px;height:4px;background:#6a9ee0;"></div>
<svg class="a" style="left:24px;top:677px;" width="4" height="4" viewBox="0 0 4 4"><path d="M4 0 V4 H0 Z" fill="#aaa"/></svg>
<div class="a" style="left:4px;top:694px;width:21px;height:1px;background:#2e2e2e;"></div>
<div class="a" style="left:4px;top:695px;width:21px;height:1px;background:#6a6a6a;"></div>
<svg class="a" style="left:5px;top:702px;" width="19" height="19" viewBox="0 0 19 19"><rect x="0" y="0" width="19" height="19" fill="#f2f2f2"/><rect x="0" y="0" width="19" height="4" fill="#7ab0f0"/><path d="M0 9 H19 M0 14 H19 M6 4 V19 M12.5 4 V19" stroke="#aaa" stroke-width="0.8"/></svg>
<svg class="a" style="left:5px;top:732px;" width="19" height="19" viewBox="0 0 19 19"><rect x="0" y="0" width="19" height="19" fill="#f2f2f2"/><rect x="0" y="0" width="19" height="3.5" fill="#e05050"/><path d="M4 17 L9.5 5 L15 17 M6 13 H13" stroke="#e03030" stroke-width="2" fill="none"/></svg>
<div class="t" style="left:5px;top:759.92px;font-size:19px;color:#e6e6e6;font-weight:normal;font-family:'Liberation Serif',serif">T</div>
<svg class="a" style="left:15px;top:766px;" width="9" height="10" viewBox="0 0 9 10"><path d="M0 1 H9 M0 4 H9 M0 7 H9 M0 9.5 H9" stroke="#ccc" stroke-width="1"/></svg>
<svg class="a" style="left:24px;top:779px;" width="4" height="4" viewBox="0 0 4 4"><path d="M4 0 V4 H0 Z" fill="#aaa"/></svg>
<div class="a" style="left:4px;top:788px;width:21px;height:1px;background:#2e2e2e;"></div>
<div class="a" style="left:4px;top:789px;width:21px;height:1px;background:#6a6a6a;"></div>
<svg class="a" style="left:4px;top:797px;" width="22" height="22" viewBox="0 0 22 22"><circle cx="4.5" cy="4.5" r="3.3" fill="#e4e4e4"/><path d="M10 3 Q13.5 3 13.5 6" stroke="#6aaaf0" stroke-width="1.2" fill="none"/><path d="M11.5 5.5 H15.5 L13.5 8 Z" fill="#6aaaf0"/><circle cx="14" cy="14" r="4.6" fill="#5fa4f4"/></svg>
<div class="a" style="left:0px;top:822px;width:29px;height:1px;background:#3a3a3a;"></div>
<div class="a" style="left:30px;top:151px;width:796px;height:29px;background:#787878;"></div>
<div class="a" style="left:30px;top:151px;width:796px;height:1px;background:#858585;"></div>
<div class="t" style="left:35px;top:158.50px;font-size:13.7px;color:#e6e6e6;font-weight:normal;letter-spacing:-0.085px;">Навигатор</div>
<svg class="a" style="left:791px;top:158px;" width="10" height="13" viewBox="0 0 10 13"><path d="M2 1 H8 M3 1 V7 M7 1 V7 M1 7.5 H9 M5 8 V12.5" stroke="#f2f2f2" stroke-width="1.6" fill="none"/></svg>
<svg class="a" style="left:809px;top:159px;" width="12" height="12" viewBox="0 0 12 12"><path d="M1 1 L11 11 M11 1 L1 11" stroke="#f2f2f2" stroke-width="1.8"/></svg>
<div class="a" style="left:30px;top:180px;width:796px;height:736px;background:#ffffff;"></div>
<div class="a" style="left:31px;top:181px;width:2px;height:735px;background:#7a7a7a;"></div>
<div class="a" style="left:31px;top:181px;width:795px;height:2px;background:#7a7a7a;"></div>
<div class="a" style="left:33px;top:183px;width:791px;height:733px;background:#ffffff;"></div>
<div class="a" style="left:33px;top:183px;width:766px;height:38px;background:#f0f0f0;"></div>
<div class="a" style="left:33px;top:183px;width:766px;height:3px;background:#fafafa;"></div>
<div class="a" style="left:33px;top:183px;width:4px;height:38px;background:#f8f8f8;"></div>
<div class="a" style="left:33px;top:221px;width:766px;height:1px;background:#8f8f8f;"></div>
<div class="a" style="left:33px;top:222px;width:766px;height:1px;background:#ffffff;"></div>
<div class="a" style="left:38px;top:186px;width:26px;height:30px;background:#d6d6d6;"></div>
<div class="a" style="left:38px;top:186px;width:26px;height:1px;background:#dcdcdc;"></div>
<div class="a" style="left:66px;top:186px;width:26px;height:30px;background:#d6d6d6;"></div>
<div class="a" style="left:66px;top:186px;width:26px;height:1px;background:#dcdcdc;"></div>
<div class="a" style="left:94px;top:186px;width:26px;height:30px;background:#d6d6d6;"></div>
<div class="a" style="left:94px;top:186px;width:26px;height:1px;background:#dcdcdc;"></div>
<div class="a" style="left:129px;top:186px;width:26px;height:30px;background:#d6d6d6;"></div>
<div class="a" style="left:129px;top:186px;width:26px;height:1px;background:#dcdcdc;"></div>
<div class="a" style="left:157px;top:186px;width:26px;height:30px;background:#d6d6d6;"></div>
<div class="a" style="left:157px;top:186px;width:26px;height:1px;background:#dcdcdc;"></div>
<div class="a" style="left:192px;top:186px;width:26px;height:30px;background:#d6d6d6;"></div>
<div class="a" style="left:192px;top:186px;width:26px;height:1px;background:#dcdcdc;"></div>
<div class="a" style="left:227px;top:186px;width:26px;height:30px;background:#d6d6d6;"></div>
<div class="a" style="left:227px;top:186px;width:26px;height:1px;background:#dcdcdc;"></div>
<svg class="a" style="left:43px;top:193px;" width="16" height="14" viewBox="0 0 16 14"><path d="M0.5 0.5 H11 L15 4 V12.5 H0.5 Z" fill="none" stroke="#111" stroke-width="1.1"/></svg>
<svg class="a" style="left:71px;top:193px;" width="17" height="17" viewBox="0 0 17 17"><path d="M0.5 0.5 H10 L14 4 V8 M0.5 0.5 V12 H4" fill="none" stroke="#111" stroke-width="1.1"/><path d="M4 9 H8 L9 10 H15 V16 H4 Z M4 16 L7 12 H16.5 L14 16" fill="none" stroke="#111" stroke-width="1.1"/></svg>
<svg class="a" style="left:99px;top:191px;" width="17" height="17" viewBox="0 0 17 17"><path d="M2.5 2.5 H12 L16 6 V15.5 H2.5 Z" fill="none" stroke="#111" stroke-width="1.1"/><path d="M1 1 L14 14 M14 1 L2 15" stroke="#111" stroke-width="2"/></svg>
<svg class="a" style="left:133px;top:193px;" width="18" height="17" viewBox="0 0 18 17"><path d="M11.39,5.64 L13.50,5.88 L13.50,8.12 L11.39,8.36 L11.07,9.15 L12.39,10.81 L10.81,12.39 L9.15,11.07 L8.36,11.39 L8.12,13.50 L5.88,13.50 L5.64,11.39 L4.85,11.07 L3.19,12.39 L1.61,10.81 L2.93,9.15 L2.61,8.36 L0.50,8.12 L0.50,5.88 L2.61,5.64 L2.93,4.85 L1.61,3.19 L3.19,1.61 L4.85,2.93 L5.64,2.61 L5.88,0.50 L8.12,0.50 L8.36,2.61 L9.15,2.93 L10.81,1.61 L12.39,3.19 L11.07,4.85 Z" fill="#fff" stroke="#111" stroke-width="1.1"/><circle cx="7" cy="7" r="2.2" fill="none" stroke="#111" stroke-width="0.9"/><path d="M6.5 9.5 H10 L11 10.5 H16.5 V16 H6.5 Z" fill="#fff" stroke="#111" stroke-width="1"/><path d="M6.5 16 L9 12 H17.5 L15.5 16" fill="#fff" stroke="#111" stroke-width="1"/></svg>
<svg class="a" style="left:161px;top:193px;" width="18" height="17" viewBox="0 0 18 17"><path d="M11.39,5.64 L13.50,5.88 L13.50,8.12 L11.39,8.36 L11.07,9.15 L12.39,10.81 L10.81,12.39 L9.15,11.07 L8.36,11.39 L8.12,13.50 L5.88,13.50 L5.64,11.39 L4.85,11.07 L3.19,12.39 L1.61,10.81 L2.93,9.15 L2.61,8.36 L0.50,8.12 L0.50,5.88 L2.61,5.64 L2.93,4.85 L1.61,3.19 L3.19,1.61 L4.85,2.93 L5.64,2.61 L5.88,0.50 L8.12,0.50 L8.36,2.61 L9.15,2.93 L10.81,1.61 L12.39,3.19 L11.07,4.85 Z" fill="#fff" stroke="#111" stroke-width="1.1"/><circle cx="7" cy="7" r="2.2" fill="none" stroke="#111" stroke-width="0.9"/><rect x="9" y="7.5" width="8.5" height="9.5" fill="#111"/><rect x="11" y="8.5" width="4.5" height="3" fill="#fff"/><rect x="10.5" y="13" width="5.5" height="3.5" fill="#fff"/><rect x="12.5" y="14" width="1.5" height="2.5" fill="#111"/></svg>
<svg class="a" style="left:196px;top:193px;" width="17" height="15" viewBox="0 0 17 15"><defs><linearGradient id="bn" x1="0" y1="0" x2="1" y2="0"><stop offset="0" stop-color="#999"/><stop offset="0.5" stop-color="#f4f4f4"/><stop offset="1" stop-color="#888"/></linearGradient></defs><path d="M2.5 0.5 H5 V3 L6.5 5 V14 H0.5 V5 L2 3 Z" fill="url(#bn)" stroke="#666" stroke-width="0.6"/><path d="M11.5 0.5 H14 V3 L15.5 5 V14 H9.5 V5 L11 3 Z" fill="url(#bn)" stroke="#666" stroke-width="0.6"/><path d="M0.5 8 H6.5 M9.5 8 H15.5" stroke="#777" stroke-width="0.8"/><rect x="6.5" y="6" width="3" height="4" fill="#bbb"/></svg>
<svg class="a" style="left:233px;top:194px;" width="15" height="15" viewBox="0 0 15 15"><path d="M12.09,6.08 L14.20,6.35 L14.20,8.65 L12.09,8.92 L11.75,9.74 L13.05,11.43 L11.43,13.05 L9.74,11.75 L8.92,12.09 L8.65,14.20 L6.35,14.20 L6.08,12.09 L5.26,11.75 L3.57,13.05 L1.95,11.43 L3.25,9.74 L2.91,8.92 L0.80,8.65 L0.80,6.35 L2.91,6.08 L3.25,5.26 L1.95,3.57 L3.57,1.95 L5.26,3.25 L6.08,2.91 L6.35,0.80 L8.65,0.80 L8.92,2.91 L9.74,3.25 L11.43,1.95 L13.05,3.57 L11.75,5.26 Z" fill="#fff" stroke="#111" stroke-width="1.2"/><circle cx="7.5" cy="7.5" r="2.4" fill="none" stroke="#111" stroke-width="1"/></svg>
<div class="a" style="left:35px;top:223px;width:742px;height:1px;background:#6a6a6a;"></div>
<div class="a" style="left:35px;top:223px;width:1px;height:693px;background:#6a6a6a;"></div>
<div class="a" style="left:36px;top:224px;width:741px;height:692px;background:#ffffff;"></div>
<div class="a" style="left:777px;top:224px;width:20px;height:692px;background:#f0f0f0;"></div>
<div class="a" style="left:797px;top:224px;width:2px;height:692px;background:#ffffff;"></div>
<svg class="a" style="left:781px;top:228px;" width="12" height="8" viewBox="0 0 12 8"><path d="M1 7 L6 2 L11 7" stroke="#505050" stroke-width="1.8" fill="none"/></svg>
<div class="a" style="left:777px;top:347px;width:20px;height:215px;background:#cdcdcd;"></div>
<div class="a" style="left:799px;top:183px;width:25px;height:733px;background:#4e4e4e;"></div>
<div class="a" style="left:824px;top:181px;width:2px;height:735px;background:#ffffff;"></div>
<div class="a" style="left:799px;top:243px;width:25px;height:61px;background:#787878;"></div>
<div class="a" style="left:799px;top:183px;width:6px;height:38px;background:#f0f0f0;"></div>
<div class="a" style="left:799px;top:183px;width:6px;height:3px;background:#fafafa;"></div>
<div class="t" style="left:805px;top:239.4px;font-size:12.8px;color:#c8c8c8;transform-origin:0 0;transform:rotate(-90deg);width:62px">GeoniCS</div>
<div class="t" style="left:805px;top:301.6px;font-size:12.8px;color:#f4f4f4;transform-origin:0 0;transform:rotate(-90deg);width:67px">Ситуация</div>
<div class="t" style="left:805px;top:357px;font-size:12.8px;color:#c8c8c8;transform-origin:0 0;transform:rotate(-90deg);width:60px">Терплан</div>
<div class="t" style="left:805px;top:417px;font-size:12.8px;color:#c8c8c8;transform-origin:0 0;transform:rotate(-90deg);width:57px">Рельеф</div>
<div class="t" style="left:805px;top:474px;font-size:12.8px;color:#c8c8c8;transform-origin:0 0;transform:rotate(-90deg);width:59px">Генплан</div>
<div class="t" style="left:805px;top:527px;font-size:12.8px;color:#c8c8c8;transform-origin:0 0;transform:rotate(-90deg);width:39px">Сети</div>
<div class="t" style="left:805px;top:594px;font-size:12.8px;color:#c8c8c8;transform-origin:0 0;transform:rotate(-90deg);width:54px">Трассы</div>
<div class="t" style="left:805px;top:659px;font-size:12.8px;color:#c8c8c8;transform-origin:0 0;transform:rotate(-90deg);width:66px">Профиль</div>
<div class="t" style="left:805px;top:717px;font-size:12.8px;color:#c8c8c8;transform-origin:0 0;transform:rotate(-90deg);width:62px">Сечения</div>
<div class="t" style="left:805px;top:776px;font-size:12.8px;color:#c8c8c8;transform-origin:0 0;transform:rotate(-90deg);width:58px">Корид...</div>
<div class="t" style="left:805px;top:836px;font-size:12.8px;color:#c8c8c8;transform-origin:0 0;transform:rotate(-90deg);width:58px">Геомо...</div>
<div class="t" style="left:805px;top:897px;font-size:12.8px;color:#c8c8c8;transform-origin:0 0;transform:rotate(-90deg);width:62px">Утилиты</div>
<div class="t" style="left:805px;top:917px;font-size:12.8px;color:#c8c8c8;transform-origin:0 0;transform:rotate(-90deg);width:18px">я</div>
<div class="a" style="left:36px;top:224px;width:741px;height:692px;overflow:hidden">
<div class="a" style="left:11px;top:0px;width:1px;height:9px;background:repeating-linear-gradient(to bottom,#7c7c7c 0 1px,transparent 1px 2px)"></div>
<div class="a" style="left:11px;top:20px;width:1px;height:6px;background:repeating-linear-gradient(to bottom,#7c7c7c 0 1px,transparent 1px 2px)"></div>
<div class="a" style="left:17px;top:14px;width:11px;height:1px;background:repeating-linear-gradient(to right,#7c7c7c 0 1px,transparent 1px 2px)"></div>
<div class="a" style="left:36px;top:26px;width:1px;height:9px;background:repeating-linear-gradient(to bottom,#7c7c7c 0 1px,transparent 1px 2px)"></div>
<div class="a" style="left:36px;top:46px;width:1px;height:6px;background:repeating-linear-gradient(to bottom,#7c7c7c 0 1px,transparent 1px 2px)"></div>
<div class="a" style="left:42px;top:40px;width:11px;height:1px;background:repeating-linear-gradient(to right,#7c7c7c 0 1px,transparent 1px 2px)"></div>
<div class="a" style="left:36px;top:52px;width:1px;height:9px;background:repeating-linear-gradient(to bottom,#7c7c7c 0 1px,transparent 1px 2px)"></div>
<div class="a" style="left:36px;top:72px;width:1px;height:6px;background:repeating-linear-gradient(to bottom,#7c7c7c 0 1px,transparent 1px 2px)"></div>
<div class="a" style="left:42px;top:66px;width:11px;height:1px;background:repeating-linear-gradient(to right,#7c7c7c 0 1px,transparent 1px 2px)"></div>
<div class="a" style="left:61px;top:78px;width:1px;height:9px;background:repeating-linear-gradient(to bottom,#7c7c7c 0 1px,transparent 1px 2px)"></div>
<div class="a" style="left:61px;top:98px;width:1px;height:6px;background:repeating-linear-gradient(to bottom,#7c7c7c 0 1px,transparent 1px 2px)"></div>
<div class="a" style="left:67px;top:92px;width:11px;height:1px;background:repeating-linear-gradient(to right,#7c7c7c 0 1px,transparent 1px 2px)"></div>
<div class="a" style="left:86px;top:104px;width:1px;height:26px;background:repeating-linear-gradient(to bottom,#7c7c7c 0 1px,transparent 1px 2px)"></div>
<div class="a" style="left:87px;top:118px;width:16px;height:1px;background:repeating-linear-gradient(to right,#7c7c7c 0 1px,transparent 1px 2px)"></div>
<div class="a" style="left:86px;top:130px;width:1px;height:26px;background:repeating-linear-gradient(to bottom,#7c7c7c 0 1px,transparent 1px 2px)"></div>
<div class="a" style="left:87px;top:144px;width:16px;height:1px;background:repeating-linear-gradient(to right,#7c7c7c 0 1px,transparent 1px 2px)"></div>
<div class="a" style="left:86px;top:156px;width:1px;height:26px;background:repeating-linear-gradient(to bottom,#7c7c7c 0 1px,transparent 1px 2px)"></div>
<div class="a" style="left:87px;top:170px;width:16px;height:1px;background:repeating-linear-gradient(to right,#7c7c7c 0 1px,transparent 1px 2px)"></div>
<div class="a" style="left:86px;top:182px;width:1px;height:26px;background:repeating-linear-gradient(to bottom,#7c7c7c 0 1px,transparent 1px 2px)"></div>
<div class="a" style="left:87px;top:196px;width:16px;height:1px;background:repeating-linear-gradient(to right,#7c7c7c 0 1px,transparent 1px 2px)"></div>
<div class="a" style="left:86px;top:208px;width:1px;height:26px;background:repeating-linear-gradient(to bottom,#7c7c7c 0 1px,transparent 1px 2px)"></div>
<div class="a" style="left:87px;top:222px;width:16px;height:1px;background:repeating-linear-gradient(to right,#7c7c7c 0 1px,transparent 1px 2px)"></div>
<div class="a" style="left:86px;top:234px;width:1px;height:26px;background:repeating-linear-gradient(to bottom,#7c7c7c 0 1px,transparent 1px 2px)"></div>
<div class="a" style="left:87px;top:248px;width:16px;height:1px;background:repeating-linear-gradient(to right,#7c7c7c 0 1px,transparent 1px 2px)"></div>
<div class="a" style="left:86px;top:260px;width:1px;height:14px;background:repeating-linear-gradient(to bottom,#7c7c7c 0 1px,transparent 1px 2px)"></div>
<div class="a" style="left:87px;top:274px;width:16px;height:1px;background:repeating-linear-gradient(to right,#7c7c7c 0 1px,transparent 1px 2px)"></div>
<div class="a" style="left:61px;top:286px;width:1px;height:9px;background:repeating-linear-gradient(to bottom,#7c7c7c 0 1px,transparent 1px 2px)"></div>
<div class="a" style="left:61px;top:306px;width:1px;height:6px;background:repeating-linear-gradient(to bottom,#7c7c7c 0 1px,transparent 1px 2px)"></div>
<div class="a" style="left:67px;top:300px;width:11px;height:1px;background:repeating-linear-gradient(to right,#7c7c7c 0 1px,transparent 1px 2px)"></div>
<div class="a" style="left:61px;top:312px;width:1px;height:9px;background:repeating-linear-gradient(to bottom,#7c7c7c 0 1px,transparent 1px 2px)"></div>
<div class="a" style="left:67px;top:326px;width:11px;height:1px;background:repeating-linear-gradient(to right,#7c7c7c 0 1px,transparent 1px 2px)"></div>
<div class="a" style="left:36px;top:338px;width:1px;height:9px;background:repeating-linear-gradient(to bottom,#7c7c7c 0 1px,transparent 1px 2px)"></div>
<div class="a" style="left:36px;top:358px;width:1px;height:6px;background:repeating-linear-gradient(to bottom,#7c7c7c 0 1px,transparent 1px 2px)"></div>
<div class="a" style="left:42px;top:352px;width:11px;height:1px;background:repeating-linear-gradient(to right,#7c7c7c 0 1px,transparent 1px 2px)"></div>
<div class="a" style="left:61px;top:364px;width:1px;height:9px;background:repeating-linear-gradient(to bottom,#7c7c7c 0 1px,transparent 1px 2px)"></div>
<div class="a" style="left:61px;top:384px;width:1px;height:6px;background:repeating-linear-gradient(to bottom,#7c7c7c 0 1px,transparent 1px 2px)"></div>
<div class="a" style="left:67px;top:378px;width:11px;height:1px;background:repeating-linear-gradient(to right,#7c7c7c 0 1px,transparent 1px 2px)"></div>
<div class="a" style="left:86px;top:390px;width:1px;height:9px;background:repeating-linear-gradient(to bottom,#7c7c7c 0 1px,transparent 1px 2px)"></div>
<div class="a" style="left:86px;top:410px;width:1px;height:6px;background:repeating-linear-gradient(to bottom,#7c7c7c 0 1px,transparent 1px 2px)"></div>
<div class="a" style="left:92px;top:404px;width:11px;height:1px;background:repeating-linear-gradient(to right,#7c7c7c 0 1px,transparent 1px 2px)"></div>
<div class="a" style="left:111px;top:416px;width:1px;height:26px;background:repeating-linear-gradient(to bottom,#7c7c7c 0 1px,transparent 1px 2px)"></div>
<div class="a" style="left:112px;top:430px;width:16px;height:1px;background:repeating-linear-gradient(to right,#7c7c7c 0 1px,transparent 1px 2px)"></div>
<div class="a" style="left:111px;top:442px;width:1px;height:9px;background:repeating-linear-gradient(to bottom,#7c7c7c 0 1px,transparent 1px 2px)"></div>
<div class="a" style="left:111px;top:462px;width:1px;height:6px;background:repeating-linear-gradient(to bottom,#7c7c7c 0 1px,transparent 1px 2px)"></div>
<div class="a" style="left:117px;top:456px;width:11px;height:1px;background:repeating-linear-gradient(to right,#7c7c7c 0 1px,transparent 1px 2px)"></div>
<div class="a" style="left:111px;top:468px;width:1px;height:9px;background:repeating-linear-gradient(to bottom,#7c7c7c 0 1px,transparent 1px 2px)"></div>
<div class="a" style="left:117px;top:482px;width:11px;height:1px;background:repeating-linear-gradient(to right,#7c7c7c 0 1px,transparent 1px 2px)"></div>
<div class="a" style="left:86px;top:494px;width:1px;height:9px;background:repeating-linear-gradient(to bottom,#7c7c7c 0 1px,transparent 1px 2px)"></div>
<div class="a" style="left:86px;top:514px;width:1px;height:6px;background:repeating-linear-gradient(to bottom,#7c7c7c 0 1px,transparent 1px 2px)"></div>
<div class="a" style="left:92px;top:508px;width:11px;height:1px;background:repeating-linear-gradient(to right,#7c7c7c 0 1px,transparent 1px 2px)"></div>
<div class="a" style="left:111px;top:520px;width:1px;height:9px;background:repeating-linear-gradient(to bottom,#7c7c7c 0 1px,transparent 1px 2px)"></div>
<div class="a" style="left:111px;top:540px;width:1px;height:6px;background:repeating-linear-gradient(to bottom,#7c7c7c 0 1px,transparent 1px 2px)"></div>
<div class="a" style="left:117px;top:534px;width:11px;height:1px;background:repeating-linear-gradient(to right,#7c7c7c 0 1px,transparent 1px 2px)"></div>
<div class="a" style="left:111px;top:546px;width:1px;height:9px;background:repeating-linear-gradient(to bottom,#7c7c7c 0 1px,transparent 1px 2px)"></div>
<div class="a" style="left:111px;top:566px;width:1px;height:6px;background:repeating-linear-gradient(to bottom,#7c7c7c 0 1px,transparent 1px 2px)"></div>
<div class="a" style="left:117px;top:560px;width:11px;height:1px;background:repeating-linear-gradient(to right,#7c7c7c 0 1px,transparent 1px 2px)"></div>
<div class="a" style="left:136px;top:572px;width:1px;height:26px;background:repeating-linear-gradient(to bottom,#7c7c7c 0 1px,transparent 1px 2px)"></div>
<div class="a" style="left:137px;top:586px;width:16px;height:1px;background:repeating-linear-gradient(to right,#7c7c7c 0 1px,transparent 1px 2px)"></div>
<div class="a" style="left:136px;top:598px;width:1px;height:26px;background:repeating-linear-gradient(to bottom,#7c7c7c 0 1px,transparent 1px 2px)"></div>
<div class="a" style="left:137px;top:612px;width:16px;height:1px;background:repeating-linear-gradient(to right,#7c7c7c 0 1px,transparent 1px 2px)"></div>
<div class="a" style="left:136px;top:624px;width:1px;height:26px;background:repeating-linear-gradient(to bottom,#7c7c7c 0 1px,transparent 1px 2px)"></div>
<div class="a" style="left:137px;top:638px;width:16px;height:1px;background:repeating-linear-gradient(to right,#7c7c7c 0 1px,transparent 1px 2px)"></div>
<div class="a" style="left:136px;top:650px;width:1px;height:26px;background:repeating-linear-gradient(to bottom,#7c7c7c 0 1px,transparent 1px 2px)"></div>
<div class="a" style="left:137px;top:664px;width:16px;height:1px;background:repeating-linear-gradient(to right,#7c7c7c 0 1px,transparent 1px 2px)"></div>
<div class="a" style="left:136px;top:676px;width:1px;height:26px;background:repeating-linear-gradient(to bottom,#7c7c7c 0 1px,transparent 1px 2px)"></div>
<div class="a" style="left:137px;top:690px;width:16px;height:1px;background:repeating-linear-gradient(to right,#7c7c7c 0 1px,transparent 1px 2px)"></div>
<div class="a" style="left:11px;top:26px;width:1px;height:26px;background:repeating-linear-gradient(to bottom,#7c7c7c 0 1px,transparent 1px 2px)"></div>
<div class="a" style="left:11px;top:52px;width:1px;height:26px;background:repeating-linear-gradient(to bottom,#7c7c7c 0 1px,transparent 1px 2px)"></div>
<div class="a" style="left:11px;top:78px;width:1px;height:26px;background:repeating-linear-gradient(to bottom,#7c7c7c 0 1px,transparent 1px 2px)"></div>
<div class="a" style="left:36px;top:78px;width:1px;height:26px;background:repeating-linear-gradient(to bottom,#7c7c7c 0 1px,transparent 1px 2px)"></div>
<div class="a" style="left:11px;top:104px;width:1px;height:26px;background:repeating-linear-gradient(to bottom,#7c7c7c 0 1px,transparent 1px 2px)"></div>
<div class="a" style="left:36px;top:104px;width:1px;height:26px;background:repeating-linear-gradient(to bottom,#7c7c7c 0 1px,transparent 1px 2px)"></div>
<div class="a" style="left:61px;top:104px;width:1px;height:26px;background:repeating-linear-gradient(to bottom,#7c7c7c 0 1px,transparent 1px 2px)"></div>
<div class="a" style="left:11px;top:130px;width:1px;height:26px;background:repeating-linear-gradient(to bottom,#7c7c7c 0 1px,transparent 1px 2px)"></div>
<div class="a" style="left:36px;top:130px;width:1px;height:26px;background:repeating-linear-gradient(to bottom,#7c7c7c 0 1px,transparent 1px 2px)"></div>
<div class="a" style="left:61px;top:130px;width:1px;height:26px;background:repeating-linear-gradient(to bottom,#7c7c7c 0 1px,transparent 1px 2px)"></div>
<div class="a" style="left:11px;top:156px;width:1px;height:26px;background:repeating-linear-gradient(to bottom,#7c7c7c 0 1px,transparent 1px 2px)"></div>
<div class="a" style="left:36px;top:156px;width:1px;height:26px;background:repeating-linear-gradient(to bottom,#7c7c7c 0 1px,transparent 1px 2px)"></div>
<div class="a" style="left:61px;top:156px;width:1px;height:26px;background:repeating-linear-gradient(to bottom,#7c7c7c 0 1px,transparent 1px 2px)"></div>
<div class="a" style="left:11px;top:182px;width:1px;height:26px;background:repeating-linear-gradient(to bottom,#7c7c7c 0 1px,transparent 1px 2px)"></div>
<div class="a" style="left:36px;top:182px;width:1px;height:26px;background:repeating-linear-gradient(to bottom,#7c7c7c 0 1px,transparent 1px 2px)"></div>
<div class="a" style="left:61px;top:182px;width:1px;height:26px;background:repeating-linear-gradient(to bottom,#7c7c7c 0 1px,transparent 1px 2px)"></div>
<div class="a" style="left:11px;top:208px;width:1px;height:26px;background:repeating-linear-gradient(to bottom,#7c7c7c 0 1px,transparent 1px 2px)"></div>
<div class="a" style="left:36px;top:208px;width:1px;height:26px;background:repeating-linear-gradient(to bottom,#7c7c7c 0 1px,transparent 1px 2px)"></div>
<div class="a" style="left:61px;top:208px;width:1px;height:26px;background:repeating-linear-gradient(to bottom,#7c7c7c 0 1px,transparent 1px 2px)"></div>
<div class="a" style="left:11px;top:234px;width:1px;height:26px;background:repeating-linear-gradient(to bottom,#7c7c7c 0 1px,transparent 1px 2px)"></div>
<div class="a" style="left:36px;top:234px;width:1px;height:26px;background:repeating-linear-gradient(to bottom,#7c7c7c 0 1px,transparent 1px 2px)"></div>
<div class="a" style="left:61px;top:234px;width:1px;height:26px;background:repeating-linear-gradient(to bottom,#7c7c7c 0 1px,transparent 1px 2px)"></div>
<div class="a" style="left:11px;top:260px;width:1px;height:26px;background:repeating-linear-gradient(to bottom,#7c7c7c 0 1px,transparent 1px 2px)"></div>
<div class="a" style="left:36px;top:260px;width:1px;height:26px;background:repeating-linear-gradient(to bottom,#7c7c7c 0 1px,transparent 1px 2px)"></div>
<div class="a" style="left:61px;top:260px;width:1px;height:26px;background:repeating-linear-gradient(to bottom,#7c7c7c 0 1px,transparent 1px 2px)"></div>
<div class="a" style="left:11px;top:286px;width:1px;height:26px;background:repeating-linear-gradient(to bottom,#7c7c7c 0 1px,transparent 1px 2px)"></div>
<div class="a" style="left:36px;top:286px;width:1px;height:26px;background:repeating-linear-gradient(to bottom,#7c7c7c 0 1px,transparent 1px 2px)"></div>
<div class="a" style="left:11px;top:312px;width:1px;height:26px;background:repeating-linear-gradient(to bottom,#7c7c7c 0 1px,transparent 1px 2px)"></div>
<div class="a" style="left:36px;top:312px;width:1px;height:26px;background:repeating-linear-gradient(to bottom,#7c7c7c 0 1px,transparent 1px 2px)"></div>
<div class="a" style="left:11px;top:338px;width:1px;height:26px;background:repeating-linear-gradient(to bottom,#7c7c7c 0 1px,transparent 1px 2px)"></div>
<div class="a" style="left:11px;top:364px;width:1px;height:26px;background:repeating-linear-gradient(to bottom,#7c7c7c 0 1px,transparent 1px 2px)"></div>
<div class="a" style="left:36px;top:364px;width:1px;height:26px;background:repeating-linear-gradient(to bottom,#7c7c7c 0 1px,transparent 1px 2px)"></div>
<div class="a" style="left:11px;top:390px;width:1px;height:26px;background:repeating-linear-gradient(to bottom,#7c7c7c 0 1px,transparent 1px 2px)"></div>
<div class="a" style="left:36px;top:390px;width:1px;height:26px;background:repeating-linear-gradient(to bottom,#7c7c7c 0 1px,transparent 1px 2px)"></div>
<div class="a" style="left:61px;top:390px;width:1px;height:26px;background:repeating-linear-gradient(to bottom,#7c7c7c 0 1px,transparent 1px 2px)"></div>
<div class="a" style="left:11px;top:416px;width:1px;height:26px;background:repeating-linear-gradient(to bottom,#7c7c7c 0 1px,transparent 1px 2px)"></div>
<div class="a" style="left:36px;top:416px;width:1px;height:26px;background:repeating-linear-gradient(to bottom,#7c7c7c 0 1px,transparent 1px 2px)"></div>
<div class="a" style="left:61px;top:416px;width:1px;height:26px;background:repeating-linear-gradient(to bottom,#7c7c7c 0 1px,transparent 1px 2px)"></div>
<div class="a" style="left:86px;top:416px;width:1px;height:26px;background:repeating-linear-gradient(to bottom,#7c7c7c 0 1px,transparent 1px 2px)"></div>
<div class="a" style="left:11px;top:442px;width:1px;height:26px;background:repeating-linear-gradient(to bottom,#7c7c7c 0 1px,transparent 1px 2px)"></div>
<div class="a" style="left:36px;top:442px;width:1px;height:26px;background:repeating-linear-gradient(to bottom,#7c7c7c 0 1px,transparent 1px 2px)"></div>
<div class="a" style="left:61px;top:442px;width:1px;height:26px;background:repeating-linear-gradient(to bottom,#7c7c7c 0 1px,transparent 1px 2px)"></div>
<div class="a" style="left:86px;top:442px;width:1px;height:26px;background:repeating-linear-gradient(to bottom,#7c7c7c 0 1px,transparent 1px 2px)"></div>
<div class="a" style="left:11px;top:468px;width:1px;height:26px;background:repeating-linear-gradient(to bottom,#7c7c7c 0 1px,transparent 1px 2px)"></div>
<div class="a" style="left:36px;top:468px;width:1px;height:26px;background:repeating-linear-gradient(to bottom,#7c7c7c 0 1px,transparent 1px 2px)"></div>
<div class="a" style="left:61px;top:468px;width:1px;height:26px;background:repeating-linear-gradient(to bottom,#7c7c7c 0 1px,transparent 1px 2px)"></div>
<div class="a" style="left:86px;top:468px;width:1px;height:26px;background:repeating-linear-gradient(to bottom,#7c7c7c 0 1px,transparent 1px 2px)"></div>
<div class="a" style="left:11px;top:494px;width:1px;height:26px;background:repeating-linear-gradient(to bottom,#7c7c7c 0 1px,transparent 1px 2px)"></div>
<div class="a" style="left:36px;top:494px;width:1px;height:26px;background:repeating-linear-gradient(to bottom,#7c7c7c 0 1px,transparent 1px 2px)"></div>
<div class="a" style="left:61px;top:494px;width:1px;height:26px;background:repeating-linear-gradient(to bottom,#7c7c7c 0 1px,transparent 1px 2px)"></div>
<div class="a" style="left:11px;top:520px;width:1px;height:26px;background:repeating-linear-gradient(to bottom,#7c7c7c 0 1px,transparent 1px 2px)"></div>
<div class="a" style="left:36px;top:520px;width:1px;height:26px;background:repeating-linear-gradient(to bottom,#7c7c7c 0 1px,transparent 1px 2px)"></div>
<div class="a" style="left:61px;top:520px;width:1px;height:26px;background:repeating-linear-gradient(to bottom,#7c7c7c 0 1px,transparent 1px 2px)"></div>
<div class="a" style="left:86px;top:520px;width:1px;height:26px;background:repeating-linear-gradient(to bottom,#7c7c7c 0 1px,transparent 1px 2px)"></div>
<div class="a" style="left:11px;top:546px;width:1px;height:26px;background:repeating-linear-gradient(to bottom,#7c7c7c 0 1px,transparent 1px 2px)"></div>
<div class="a" style="left:36px;top:546px;width:1px;height:26px;background:repeating-linear-gradient(to bottom,#7c7c7c 0 1px,transparent 1px 2px)"></div>
<div class="a" style="left:61px;top:546px;width:1px;height:26px;background:repeating-linear-gradient(to bottom,#7c7c7c 0 1px,transparent 1px 2px)"></div>
<div class="a" style="left:86px;top:546px;width:1px;height:26px;background:repeating-linear-gradient(to bottom,#7c7c7c 0 1px,transparent 1px 2px)"></div>
<div class="a" style="left:11px;top:572px;width:1px;height:26px;background:repeating-linear-gradient(to bottom,#7c7c7c 0 1px,transparent 1px 2px)"></div>
<div class="a" style="left:36px;top:572px;width:1px;height:26px;background:repeating-linear-gradient(to bottom,#7c7c7c 0 1px,transparent 1px 2px)"></div>
<div class="a" style="left:61px;top:572px;width:1px;height:26px;background:repeating-linear-gradient(to bottom,#7c7c7c 0 1px,transparent 1px 2px)"></div>
<div class="a" style="left:86px;top:572px;width:1px;height:26px;background:repeating-linear-gradient(to bottom,#7c7c7c 0 1px,transparent 1px 2px)"></div>
<div class="a" style="left:111px;top:572px;width:1px;height:26px;background:repeating-linear-gradient(to bottom,#7c7c7c 0 1px,transparent 1px 2px)"></div>
<div class="a" style="left:11px;top:598px;width:1px;height:26px;background:repeating-linear-gradient(to bottom,#7c7c7c 0 1px,transparent 1px 2px)"></div>
<div class="a" style="left:36px;top:598px;width:1px;height:26px;background:repeating-linear-gradient(to bottom,#7c7c7c 0 1px,transparent 1px 2px)"></div>
<div class="a" style="left:61px;top:598px;width:1px;height:26px;background:repeating-linear-gradient(to bottom,#7c7c7c 0 1px,transparent 1px 2px)"></div>
<div class="a" style="left:86px;top:598px;width:1px;height:26px;background:repeating-linear-gradient(to bottom,#7c7c7c 0 1px,transparent 1px 2px)"></div>
<div class="a" style="left:111px;top:598px;width:1px;height:26px;background:repeating-linear-gradient(to bottom,#7c7c7c 0 1px,transparent 1px 2px)"></div>
<div class="a" style="left:11px;top:624px;width:1px;height:26px;background:repeating-linear-gradient(to bottom,#7c7c7c 0 1px,transparent 1px 2px)"></div>
<div class="a" style="left:36px;top:624px;width:1px;height:26px;background:repeating-linear-gradient(to bottom,#7c7c7c 0 1px,transparent 1px 2px)"></div>
<div class="a" style="left:61px;top:624px;width:1px;height:26px;background:repeating-linear-gradient(to bottom,#7c7c7c 0 1px,transparent 1px 2px)"></div>
<div class="a" style="left:86px;top:624px;width:1px;height:26px;background:repeating-linear-gradient(to bottom,#7c7c7c 0 1px,transparent 1px 2px)"></div>
<div class="a" style="left:111px;top:624px;width:1px;height:26px;background:repeating-linear-gradient(to bottom,#7c7c7c 0 1px,transparent 1px 2px)"></div>
<div class="a" style="left:11px;top:650px;width:1px;height:26px;background:repeating-linear-gradient(to bottom,#7c7c7c 0 1px,transparent 1px 2px)"></div>
<div class="a" style="left:36px;top:650px;width:1px;height:26px;background:repeating-linear-gradient(to bottom,#7c7c7c 0 1px,transparent 1px 2px)"></div>
<div class="a" style="left:61px;top:650px;width:1px;height:26px;background:repeating-linear-gradient(to bottom,#7c7c7c 0 1px,transparent 1px 2px)"></div>
<div class="a" style="left:86px;top:650px;width:1px;height:26px;background:repeating-linear-gradient(to bottom,#7c7c7c 0 1px,transparent 1px 2px)"></div>
<div class="a" style="left:111px;top:650px;width:1px;height:26px;background:repeating-linear-gradient(to bottom,#7c7c7c 0 1px,transparent 1px 2px)"></div>
<div class="a" style="left:11px;top:676px;width:1px;height:26px;background:repeating-linear-gradient(to bottom,#7c7c7c 0 1px,transparent 1px 2px)"></div>
<div class="a" style="left:36px;top:676px;width:1px;height:26px;background:repeating-linear-gradient(to bottom,#7c7c7c 0 1px,transparent 1px 2px)"></div>
<div class="a" style="left:61px;top:676px;width:1px;height:26px;background:repeating-linear-gradient(to bottom,#7c7c7c 0 1px,transparent 1px 2px)"></div>
<div class="a" style="left:86px;top:676px;width:1px;height:26px;background:repeating-linear-gradient(to bottom,#7c7c7c 0 1px,transparent 1px 2px)"></div>
<div class="a" style="left:111px;top:676px;width:1px;height:26px;background:repeating-linear-gradient(to bottom,#7c7c7c 0 1px,transparent 1px 2px)"></div>
<svg class="a" style="left:6px;top:9px" width="11" height="11" viewBox="0 0 11 11"><defs><linearGradient id="bx" x1="0" y1="0" x2="0" y2="1"><stop offset="0" stop-color="#fff"/><stop offset="0.5" stop-color="#f4f4f8"/><stop offset="0.55" stop-color="#e2e2ea"/><stop offset="1" stop-color="#e6e6ec"/></linearGradient></defs><rect x="0.5" y="0.5" width="10" height="10" rx="1.5" fill="url(#bx)" stroke="#8a8a8a"/><path d="M2.5 5.5 H8.5" stroke="#3a3a7a" stroke-width="1.2"/></svg>
<svg class="a" style="left:28px;top:6px" width="17" height="14" viewBox="0 0 17 14"><path d="M0.5 11 V3 Q0.5 0.8 2.5 0.8 H6.5 L8 2.2 H13.5 V5.5" fill="#f4f490" stroke="#777" stroke-width="0.7"/><path d="M0.5 5.5 H12.5 L15.8 12.3 H3.2 Z" fill="#eeee80" stroke="#888" stroke-width="0.6"/><path d="M12.8 5.8 L16.2 12.8 M3 13.2 H16.5" stroke="#000" stroke-width="1.5"/></svg>
<div class="t" style="left:49px;top:5.03px;font-size:16.5px;color:#111;font-weight:normal;letter-spacing:0.028px;">ЗНАКИ</div>
<svg class="a" style="left:31px;top:35px" width="11" height="11" viewBox="0 0 11 11"><defs><linearGradient id="bx" x1="0" y1="0" x2="0" y2="1"><stop offset="0" stop-color="#fff"/><stop offset="0.5" stop-color="#f4f4f8"/><stop offset="0.55" stop-color="#e2e2ea"/><stop offset="1" stop-color="#e6e6ec"/></linearGradient></defs><rect x="0.5" y="0.5" width="10" height="10" rx="1.5" fill="url(#bx)" stroke="#8a8a8a"/><path d="M2.5 5.5 H8.5" stroke="#3a3a7a" stroke-width="1.2"/><path d="M5.5 2.5 V8.5" stroke="#3a3a7a" stroke-width="1.2"/></svg>
<svg class="a" style="left:53px;top:32px" width="16" height="14" viewBox="0 0 16 14"><path d="M0.5 2.5 Q0.5 0.5 2.5 0.5 H6 L7.5 2 H13.5 V12.5 H0.5 Z" fill="#f4f490" stroke="#666" stroke-width="0.8"/><path d="M14.5 3 V13.5 H1.5" stroke="#000" stroke-width="1.6" fill="none"/></svg>
<div class="t" style="left:74px;top:31.03px;font-size:16.5px;color:#111;font-weight:normal;letter-spacing:0.360px;">1 Пункты геодезические, обозначения высот</div>
<svg class="a" style="left:31px;top:61px" width="11" height="11" viewBox="0 0 11 11"><defs><linearGradient id="bx" x1="0" y1="0" x2="0" y2="1"><stop offset="0" stop-color="#fff"/><stop offset="0.5" stop-color="#f4f4f8"/><stop offset="0.55" stop-color="#e2e2ea"/><stop offset="1" stop-color="#e6e6ec"/></linearGradient></defs><rect x="0.5" y="0.5" width="10" height="10" rx="1.5" fill="url(#bx)" stroke="#8a8a8a"/><path d="M2.5 5.5 H8.5" stroke="#3a3a7a" stroke-width="1.2"/></svg>
<svg class="a" style="left:53px;top:58px" width="17" height="14" viewBox="0 0 17 14"><path d="M0.5 11 V3 Q0.5 0.8 2.5 0.8 H6.5 L8 2.2 H13.5 V5.5" fill="#f4f490" stroke="#777" stroke-width="0.7"/><path d="M0.5 5.5 H12.5 L15.8 12.3 H3.2 Z" fill="#eeee80" stroke="#888" stroke-width="0.6"/><path d="M12.8 5.8 L16.2 12.8 M3 13.2 H16.5" stroke="#000" stroke-width="1.5"/></svg>
<div class="t" style="left:74px;top:57.03px;font-size:16.5px;color:#111;font-weight:normal;letter-spacing:-0.307px;">2 Рельеф</div>
<svg class="a" style="left:56px;top:87px" width="11" height="11" viewBox="0 0 11 11"><defs><linearGradient id="bx" x1="0" y1="0" x2="0" y2="1"><stop offset="0" stop-color="#fff"/><stop offset="0.5" stop-color="#f4f4f8"/><stop offset="0.55" stop-color="#e2e2ea"/><stop offset="1" stop-color="#e6e6ec"/></linearGradient></defs><rect x="0.5" y="0.5" width="10" height="10" rx="1.5" fill="url(#bx)" stroke="#8a8a8a"/><path d="M2.5 5.5 H8.5" stroke="#3a3a7a" stroke-width="1.2"/></svg>
<svg class="a" style="left:78px;top:84px" width="17" height="14" viewBox="0 0 17 14"><path d="M0.5 11 V3 Q0.5 0.8 2.5 0.8 H6.5 L8 2.2 H13.5 V5.5" fill="#f4f490" stroke="#777" stroke-width="0.7"/><path d="M0.5 5.5 H12.5 L15.8 12.3 H3.2 Z" fill="#eeee80" stroke="#888" stroke-width="0.6"/><path d="M12.8 5.8 L16.2 12.8 M3 13.2 H16.5" stroke="#000" stroke-width="1.5"/></svg>
<div class="t" style="left:99px;top:83.03px;font-size:16.5px;color:#111;font-weight:normal;letter-spacing:0.282px;">21 Рельеф, выраженный горизонталями</div>
<svg class="a" style="left:103px;top:111px" width="17" height="11" viewBox="0 0 17 11"><path d="M0.5 4 Q3 0 5 1.5 L9.5 9 Q11 10.5 13 9 L16 5.5" stroke="#111" stroke-width="1.2" fill="none"/></svg>
<div class="t" style="left:124px;top:109.03px;font-size:16.5px;color:#111;font-weight:normal;letter-spacing:0.283px;">21100000 Горизонтали утолщенные - Л</div>
<svg class="a" style="left:103px;top:137px" width="17" height="11" viewBox="0 0 17 11"><path d="M0.5 4 Q3 0 5 1.5 L9.5 9 Q11 10.5 13 9 L16 5.5" stroke="#111" stroke-width="1.2" fill="none"/></svg>
<div class="t" style="left:124px;top:135.03px;font-size:16.5px;color:#111;font-weight:normal;letter-spacing:0.277px;">21200000 Горизонтали основные - Л</div>
<svg class="a" style="left:103px;top:163px" width="17" height="11" viewBox="0 0 17 11"><path d="M0.5 4 Q3 0 5 1.5 L9.5 9 Q11 10.5 13 9 L16 5.5" stroke="#111" stroke-width="1.4" fill="none" stroke-dasharray="2 2.2"/></svg>
<div class="t" style="left:124px;top:161.03px;font-size:16.5px;color:#111;font-weight:normal;letter-spacing:0.271px;">21300000 Горизонтали дополнительные - Л</div>
<svg class="a" style="left:103px;top:189px" width="17" height="11" viewBox="0 0 17 11"><path d="M0.5 4 Q3 0 5 1.5 L9.5 9 Q11 10.5 13 9 L16 5.5" stroke="#111" stroke-width="1.4" fill="none" stroke-dasharray="2 2.2"/></svg>
<div class="t" style="left:124px;top:187.03px;font-size:16.5px;color:#111;font-weight:normal;letter-spacing:0.306px;">21400000 Горизонтали вспомогательные - Л</div>
<svg class="a" style="left:103px;top:215px" width="17" height="11" viewBox="0 0 17 11"><path d="M0.5 4 Q3 0 5 1.5 L9.5 9 Q11 10.5 13 9 L16 5.5" stroke="#111" stroke-width="1.4" fill="none" stroke-dasharray="2 2.2"/></svg>
<div class="t" style="left:124px;top:213.03px;font-size:16.5px;color:#111;font-weight:normal;letter-spacing:0.318px;">21500000 Горизонтали для отображения нависающих склонов - Л</div>
<svg class="a" style="left:103px;top:241px" width="17" height="11" viewBox="0 0 17 11"><path d="M0.5 4 Q3 0 5 1.5 L9.5 9 Q11 10.5 13 9 L16 5.5" stroke="#111" stroke-width="1.2" fill="none"/></svg>
<div class="t" style="left:124px;top:239.03px;font-size:16.5px;color:#111;font-weight:normal;letter-spacing:0.315px;">21600000 Горизонтали для изображения дна водоемов - Л</div>
<div class="t" style="left:102px;top:269px;font-size:8px;font-weight:bold;color:#111;letter-spacing:-0.3px">текст</div>
<div class="t" style="left:124px;top:265.03px;font-size:16.5px;color:#111;font-weight:normal;letter-spacing:0.217px;">21700000 Надписи горизонталей - Т</div>
<svg class="a" style="left:56px;top:295px" width="11" height="11" viewBox="0 0 11 11"><defs><linearGradient id="bx" x1="0" y1="0" x2="0" y2="1"><stop offset="0" stop-color="#fff"/><stop offset="0.5" stop-color="#f4f4f8"/><stop offset="0.55" stop-color="#e2e2ea"/><stop offset="1" stop-color="#e6e6ec"/></linearGradient></defs><rect x="0.5" y="0.5" width="10" height="10" rx="1.5" fill="url(#bx)" stroke="#8a8a8a"/><path d="M2.5 5.5 H8.5" stroke="#3a3a7a" stroke-width="1.2"/><path d="M5.5 2.5 V8.5" stroke="#3a3a7a" stroke-width="1.2"/></svg>
<svg class="a" style="left:78px;top:292px" width="16" height="14" viewBox="0 0 16 14"><path d="M0.5 2.5 Q0.5 0.5 2.5 0.5 H6 L7.5 2 H13.5 V12.5 H0.5 Z" fill="#f4f490" stroke="#666" stroke-width="0.8"/><path d="M14.5 3 V13.5 H1.5" stroke="#000" stroke-width="1.6" fill="none"/></svg>
<div class="t" style="left:99px;top:291.03px;font-size:16.5px;color:#111;font-weight:normal;letter-spacing:0.257px;">22 Формы рельефа, не выражаемые горизонталями</div>
<svg class="a" style="left:56px;top:321px" width="11" height="11" viewBox="0 0 11 11"><defs><linearGradient id="bx" x1="0" y1="0" x2="0" y2="1"><stop offset="0" stop-color="#fff"/><stop offset="0.5" stop-color="#f4f4f8"/><stop offset="0.55" stop-color="#e2e2ea"/><stop offset="1" stop-color="#e6e6ec"/></linearGradient></defs><rect x="0.5" y="0.5" width="10" height="10" rx="1.5" fill="url(#bx)" stroke="#8a8a8a"/><path d="M2.5 5.5 H8.5" stroke="#3a3a7a" stroke-width="1.2"/><path d="M5.5 2.5 V8.5" stroke="#3a3a7a" stroke-width="1.2"/></svg>
<svg class="a" style="left:78px;top:318px" width="16" height="14" viewBox="0 0 16 14"><path d="M0.5 2.5 Q0.5 0.5 2.5 0.5 H6 L7.5 2 H13.5 V12.5 H0.5 Z" fill="#f4f490" stroke="#666" stroke-width="0.8"/><path d="M14.5 3 V13.5 H1.5" stroke="#000" stroke-width="1.6" fill="none"/></svg>
<div class="t" style="left:99px;top:317.03px;font-size:16.5px;color:#111;font-weight:normal;letter-spacing:0.110px;">23 Характеристики рельефа на карте, выделяющиеся как самостоятельные объекты</div>
<svg class="a" style="left:31px;top:347px" width="11" height="11" viewBox="0 0 11 11"><defs><linearGradient id="bx" x1="0" y1="0" x2="0" y2="1"><stop offset="0" stop-color="#fff"/><stop offset="0.5" stop-color="#f4f4f8"/><stop offset="0.55" stop-color="#e2e2ea"/><stop offset="1" stop-color="#e6e6ec"/></linearGradient></defs><rect x="0.5" y="0.5" width="10" height="10" rx="1.5" fill="url(#bx)" stroke="#8a8a8a"/><path d="M2.5 5.5 H8.5" stroke="#3a3a7a" stroke-width="1.2"/></svg>
<svg class="a" style="left:53px;top:344px" width="17" height="14" viewBox="0 0 17 14"><path d="M0.5 11 V3 Q0.5 0.8 2.5 0.8 H6.5 L8 2.2 H13.5 V5.5" fill="#f4f490" stroke="#777" stroke-width="0.7"/><path d="M0.5 5.5 H12.5 L15.8 12.3 H3.2 Z" fill="#eeee80" stroke="#888" stroke-width="0.6"/><path d="M12.8 5.8 L16.2 12.8 M3 13.2 H16.5" stroke="#000" stroke-width="1.5"/></svg>
<div class="t" style="left:74px;top:343.03px;font-size:16.5px;color:#111;font-weight:normal;letter-spacing:0.339px;">3 Гидрография, гидротехнические объекты, водный транспорт и водоснабжения</div>
<svg class="a" style="left:56px;top:373px" width="11" height="11" viewBox="0 0 11 11"><defs><linearGradient id="bx" x1="0" y1="0" x2="0" y2="1"><stop offset="0" stop-color="#fff"/><stop offset="0.5" stop-color="#f4f4f8"/><stop offset="0.55" stop-color="#e2e2ea"/><stop offset="1" stop-color="#e6e6ec"/></linearGradient></defs><rect x="0.5" y="0.5" width="10" height="10" rx="1.5" fill="url(#bx)" stroke="#8a8a8a"/><path d="M2.5 5.5 H8.5" stroke="#3a3a7a" stroke-width="1.2"/></svg>
<svg class="a" style="left:78px;top:370px" width="17" height="14" viewBox="0 0 17 14"><path d="M0.5 11 V3 Q0.5 0.8 2.5 0.8 H6.5 L8 2.2 H13.5 V5.5" fill="#f4f490" stroke="#777" stroke-width="0.7"/><path d="M0.5 5.5 H12.5 L15.8 12.3 H3.2 Z" fill="#eeee80" stroke="#888" stroke-width="0.6"/><path d="M12.8 5.8 L16.2 12.8 M3 13.2 H16.5" stroke="#000" stroke-width="1.5"/></svg>
<div class="t" style="left:99px;top:369.03px;font-size:16.5px;color:#111;font-weight:normal;letter-spacing:0.132px;">31 Гидрография</div>
<svg class="a" style="left:81px;top:399px" width="11" height="11" viewBox="0 0 11 11"><defs><linearGradient id="bx" x1="0" y1="0" x2="0" y2="1"><stop offset="0" stop-color="#fff"/><stop offset="0.5" stop-color="#f4f4f8"/><stop offset="0.55" stop-color="#e2e2ea"/><stop offset="1" stop-color="#e6e6ec"/></linearGradient></defs><rect x="0.5" y="0.5" width="10" height="10" rx="1.5" fill="url(#bx)" stroke="#8a8a8a"/><path d="M2.5 5.5 H8.5" stroke="#3a3a7a" stroke-width="1.2"/></svg>
<svg class="a" style="left:103px;top:396px" width="17" height="14" viewBox="0 0 17 14"><path d="M0.5 11 V3 Q0.5 0.8 2.5 0.8 H6.5 L8 2.2 H13.5 V5.5" fill="#f4f490" stroke="#777" stroke-width="0.7"/><path d="M0.5 5.5 H12.5 L15.8 12.3 H3.2 Z" fill="#eeee80" stroke="#888" stroke-width="0.6"/><path d="M12.8 5.8 L16.2 12.8 M3 13.2 H16.5" stroke="#000" stroke-width="1.5"/></svg>
<div class="t" style="left:124px;top:395.03px;font-size:16.5px;color:#111;font-weight:normal;letter-spacing:0.209px;">311 Водоемы</div>
<svg class="a" style="left:129px;top:421px" width="16" height="16" viewBox="0 0 16 16"><path d="M1 5 L5 1 H10 L14.5 5 V8 L13 9.5 H10 L9 11 V13 L7.5 15 H5 L1 11 Z" fill="#00ffee" stroke="#00c000" stroke-width="1.3"/></svg>
<div class="t" style="left:149px;top:421.03px;font-size:16.5px;color:#111;font-weight:normal;letter-spacing:0.367px;">31110000 Океаны и моря - П</div>
<svg class="a" style="left:106px;top:451px" width="11" height="11" viewBox="0 0 11 11"><defs><linearGradient id="bx" x1="0" y1="0" x2="0" y2="1"><stop offset="0" stop-color="#fff"/><stop offset="0.5" stop-color="#f4f4f8"/><stop offset="0.55" stop-color="#e2e2ea"/><stop offset="1" stop-color="#e6e6ec"/></linearGradient></defs><rect x="0.5" y="0.5" width="10" height="10" rx="1.5" fill="url(#bx)" stroke="#8a8a8a"/><path d="M2.5 5.5 H8.5" stroke="#3a3a7a" stroke-width="1.2"/><path d="M5.5 2.5 V8.5" stroke="#3a3a7a" stroke-width="1.2"/></svg>
<svg class="a" style="left:128px;top:448px" width="16" height="14" viewBox="0 0 16 14"><path d="M0.5 2.5 Q0.5 0.5 2.5 0.5 H6 L7.5 2 H13.5 V12.5 H0.5 Z" fill="#f4f490" stroke="#666" stroke-width="0.8"/><path d="M14.5 3 V13.5 H1.5" stroke="#000" stroke-width="1.6" fill="none"/></svg>
<div class="t" style="left:149px;top:447.03px;font-size:16.5px;color:#111;font-weight:normal;letter-spacing:0.189px;">3112 Озера</div>
<svg class="a" style="left:106px;top:477px" width="11" height="11" viewBox="0 0 11 11"><defs><linearGradient id="bx" x1="0" y1="0" x2="0" y2="1"><stop offset="0" stop-color="#fff"/><stop offset="0.5" stop-color="#f4f4f8"/><stop offset="0.55" stop-color="#e2e2ea"/><stop offset="1" stop-color="#e6e6ec"/></linearGradient></defs><rect x="0.5" y="0.5" width="10" height="10" rx="1.5" fill="url(#bx)" stroke="#8a8a8a"/><path d="M2.5 5.5 H8.5" stroke="#3a3a7a" stroke-width="1.2"/><path d="M5.5 2.5 V8.5" stroke="#3a3a7a" stroke-width="1.2"/></svg>
<svg class="a" style="left:128px;top:474px" width="16" height="14" viewBox="0 0 16 14"><path d="M0.5 2.5 Q0.5 0.5 2.5 0.5 H6 L7.5 2 H13.5 V12.5 H0.5 Z" fill="#f4f490" stroke="#666" stroke-width="0.8"/><path d="M14.5 3 V13.5 H1.5" stroke="#000" stroke-width="1.6" fill="none"/></svg>
<div class="t" style="left:149px;top:473.03px;font-size:16.5px;color:#111;font-weight:normal;letter-spacing:0.275px;">3113 Водохранилища и другие водоемы</div>
<svg class="a" style="left:81px;top:503px" width="11" height="11" viewBox="0 0 11 11"><defs><linearGradient id="bx" x1="0" y1="0" x2="0" y2="1"><stop offset="0" stop-color="#fff"/><stop offset="0.5" stop-color="#f4f4f8"/><stop offset="0.55" stop-color="#e2e2ea"/><stop offset="1" stop-color="#e6e6ec"/></linearGradient></defs><rect x="0.5" y="0.5" width="10" height="10" rx="1.5" fill="url(#bx)" stroke="#8a8a8a"/><path d="M2.5 5.5 H8.5" stroke="#3a3a7a" stroke-width="1.2"/></svg>
<svg class="a" style="left:103px;top:500px" width="17" height="14" viewBox="0 0 17 14"><path d="M0.5 11 V3 Q0.5 0.8 2.5 0.8 H6.5 L8 2.2 H13.5 V5.5" fill="#f4f490" stroke="#777" stroke-width="0.7"/><path d="M0.5 5.5 H12.5 L15.8 12.3 H3.2 Z" fill="#eeee80" stroke="#888" stroke-width="0.6"/><path d="M12.8 5.8 L16.2 12.8 M3 13.2 H16.5" stroke="#000" stroke-width="1.5"/></svg>
<div class="t" style="left:124px;top:499.03px;font-size:16.5px;color:#111;font-weight:normal;letter-spacing:0.394px;">312 Объекты прибережной полосы</div>
<svg class="a" style="left:106px;top:529px" width="11" height="11" viewBox="0 0 11 11"><defs><linearGradient id="bx" x1="0" y1="0" x2="0" y2="1"><stop offset="0" stop-color="#fff"/><stop offset="0.5" stop-color="#f4f4f8"/><stop offset="0.55" stop-color="#e2e2ea"/><stop offset="1" stop-color="#e6e6ec"/></linearGradient></defs><rect x="0.5" y="0.5" width="10" height="10" rx="1.5" fill="url(#bx)" stroke="#8a8a8a"/><path d="M2.5 5.5 H8.5" stroke="#3a3a7a" stroke-width="1.2"/><path d="M5.5 2.5 V8.5" stroke="#3a3a7a" stroke-width="1.2"/></svg>
<svg class="a" style="left:128px;top:526px" width="16" height="14" viewBox="0 0 16 14"><path d="M0.5 2.5 Q0.5 0.5 2.5 0.5 H6 L7.5 2 H13.5 V12.5 H0.5 Z" fill="#f4f490" stroke="#666" stroke-width="0.8"/><path d="M14.5 3 V13.5 H1.5" stroke="#000" stroke-width="1.6" fill="none"/></svg>
<div class="t" style="left:149px;top:525.03px;font-size:16.5px;color:#111;font-weight:normal;letter-spacing:0.253px;">3121 Отмели и мели береговые</div>
<svg class="a" style="left:106px;top:555px" width="11" height="11" viewBox="0 0 11 11"><defs><linearGradient id="bx" x1="0" y1="0" x2="0" y2="1"><stop offset="0" stop-color="#fff"/><stop offset="0.5" stop-color="#f4f4f8"/><stop offset="0.55" stop-color="#e2e2ea"/><stop offset="1" stop-color="#e6e6ec"/></linearGradient></defs><rect x="0.5" y="0.5" width="10" height="10" rx="1.5" fill="url(#bx)" stroke="#8a8a8a"/><path d="M2.5 5.5 H8.5" stroke="#3a3a7a" stroke-width="1.2"/></svg>
<svg class="a" style="left:128px;top:552px" width="17" height="14" viewBox="0 0 17 14"><path d="M0.5 11 V3 Q0.5 0.8 2.5 0.8 H6.5 L8 2.2 H13.5 V5.5" fill="#f4f490" stroke="#777" stroke-width="0.7"/><path d="M0.5 5.5 H12.5 L15.8 12.3 H3.2 Z" fill="#eeee80" stroke="#888" stroke-width="0.6"/><path d="M12.8 5.8 L16.2 12.8 M3 13.2 H16.5" stroke="#000" stroke-width="1.5"/></svg>
<div class="t" style="left:149px;top:551.03px;font-size:16.5px;color:#111;font-weight:normal;letter-spacing:0.124px;">3124 Берега обрывистые</div>
<svg class="a" style="left:153px;top:577px" width="16" height="16" viewBox="0 0 16 16"><path d="M0.8 14.5 L15 1" stroke="#111" stroke-width="1.6"/><path d="M3.5 12 L6 15 M6.8 8.9 L9.3 11.9 M10 5.8 L12.5 8.8 M13 3 L15.5 6" stroke="#111" stroke-width="1.2"/></svg>
<div class="a" style="left:172px;top:572px;width:367px;height:26px;background:#ececec"></div>
<div class="t" style="left:174px;top:577.03px;font-size:16.5px;color:#111;font-weight:bold;letter-spacing:0.308px;">31241000 Берега обрывистые с пляжем - Л</div>
<svg class="a" style="left:153px;top:603px" width="16" height="16" viewBox="0 0 16 16"><path d="M0.8 14.5 L15 1" stroke="#111" stroke-width="1.6"/><path d="M3.5 12 L6 15 M6.8 8.9 L9.3 11.9 M10 5.8 L12.5 8.8 M13 3 L15.5 6" stroke="#111" stroke-width="1.2"/></svg>
<div class="t" style="left:174px;top:603.03px;font-size:16.5px;color:#111;font-weight:normal;letter-spacing:0.238px;">31242000 Берега обрывистые без пляжа - Л</div>
<svg class="a" style="left:153px;top:629px" width="16" height="16" viewBox="0 0 16 16"><path d="M0.8 14.5 L15 1" stroke="#111" stroke-width="1.6"/><path d="M3.5 12 L6 15 M6.8 8.9 L9.3 11.9 M10 5.8 L12.5 8.8 M13 3 L15.5 6" stroke="#111" stroke-width="1.2"/></svg>
<div class="t" style="left:174px;top:629.03px;font-size:16.5px;color:#111;font-weight:normal;letter-spacing:0.269px;">31242100 Берега обрывистые без пляжа (для рек и заливов шриной на карте до 3 мм) - Л</div>
<svg class="a" style="left:153px;top:655px" width="16" height="16" viewBox="0 0 16 16"><path d="M0.8 14.5 L15 1" stroke="#111" stroke-width="1.6"/><path d="M3.5 12 L6 15 M6.8 8.9 L9.3 11.9 M10 5.8 L12.5 8.8 M13 3 L15.5 6" stroke="#111" stroke-width="1.2"/></svg>
<div class="t" style="left:174px;top:655.03px;font-size:16.5px;color:#111;font-weight:normal;letter-spacing:0.279px;">31242200 Берега обрывистые без пляжа (для рек и заливов шириной на карте до 3 мм) - Л</div>
<div class="t" style="left:152px;top:685px;font-size:8px;font-weight:bold;color:#111;letter-spacing:-0.3px">текст</div>
<div class="t" style="left:174px;top:681.03px;font-size:16.5px;color:#111;font-weight:normal;letter-spacing:0.465px;">31242300 Глубины береговых обрывов - Т</div>
</div>
<div class="a" style="left:826px;top:151px;width:550px;height:765px;background:#555555;"></div>
<div class="a" style="left:831px;top:151px;width:545px;height:30px;background:#4a4a4a;"></div>
<div class="a" style="left:831px;top:152px;width:219px;height:27px;background:#7a7a7a;"></div>
<div class="a" style="left:831px;top:152px;width:219px;height:1px;background:#8a8a8a;"></div>
<div class="t" style="left:864px;top:159.24px;font-size:13.3px;color:#f2f2f2;font-weight:normal;letter-spacing:-0.003px;">Работа с БД УТЗ.dwg*</div>
<svg class="a" style="left:1031px;top:162px;" width="11" height="11" viewBox="0 0 11 11"><path d="M1 1 L10 10 M10 1 L1 10" stroke="#f0f0f0" stroke-width="1.7"/></svg>
<div class="a" style="left:831px;top:179px;width:545px;height:2px;background:#555555;"></div>
<div class="a" style="left:833px;top:181px;width:543px;height:711px;background:#2a2a2a;"></div>
<div class="a" style="left:832px;top:181px;width:1px;height:711px;background:#6a6a6a;"></div>
<div class="a" style="left:840px;top:186px;width:29px;height:19px;background:#474747;border-radius:9.5px"></div>
<div class="a" style="left:874px;top:186px;width:69px;height:19px;background:#474747;border-radius:9.5px"></div>
<div class="a" style="left:946px;top:186px;width:89px;height:19px;background:#474747;border-radius:9.5px"></div>
<div class="a" style="left:1039px;top:186px;width:189px;height:19px;background:#474747;border-radius:9.5px"></div>
<div class="t" style="left:851px;top:188.15px;font-size:14px;color:#8c8c8c;font-weight:normal;">+</div>
<div class="t" style="left:885px;top:188.95px;font-size:14px;color:#8c8c8c;font-weight:normal;letter-spacing:-0.052px;">Сверху</div>
<div class="t" style="left:958px;top:188.95px;font-size:14px;color:#8c8c8c;font-weight:normal;letter-spacing:0.023px;">2D-каркас</div>
<div class="t" style="left:1049px;top:188.95px;font-size:14px;color:#8c8c8c;font-weight:normal;letter-spacing:-0.120px;">--- нет связанных видов ---</div>
<svg class="a" style="left:864px;top:808px;" width="150" height="52" viewBox="0 0 150 52"><path d="M13.5 0 V29" stroke="#e8e8e8" stroke-width="1.2"/><rect x="3.5" y="29.5" width="20" height="20" fill="none" stroke="#e8e8e8" stroke-width="1.2"/><path d="M23.5 39.5 H91" stroke="#e8e8e8" stroke-width="1.2"/><path d="M91 31 L114 39.5 L91 48 Z" fill="none" stroke="#e8e8e8" stroke-width="1.2"/><path d="M129 32.5 L141 45.5 M141 32.5 L129 45.5" stroke="#e8e8e8" stroke-width="1.3"/></svg>
<div class="a" style="left:826px;top:892px;width:550px;height:24px;background:#555555;"></div>
<div class="a" style="left:833px;top:891px;width:543px;height:1px;background:#8a8a8a;"></div>
<svg class="a" style="left:836px;top:896px;" width="19" height="16" viewBox="0 0 19 16"><rect x="0.5" y="0.5" width="18" height="15" fill="#2a3a5a" stroke="#e8e8e8"/><path d="M1 4.5 H18 M1 8 H18 M1 11.5 H18" stroke="#e8e8e8" stroke-width="0.9"/><rect x="1" y="5" width="17" height="3" fill="#7ab0f0"/></svg>
<div class="a" style="left:877px;top:892px;width:65px;height:24px;background:#6e6e6e;"></div>
<div class="a" style="left:942px;top:893px;width:1px;height:23px;background:#8a8a8a;"></div>
<div class="a" style="left:943px;top:893px;width:1px;height:23px;background:#404040;"></div>
<div class="a" style="left:1078px;top:893px;width:1px;height:23px;background:#8a8a8a;"></div>
<div class="a" style="left:1079px;top:893px;width:1px;height:23px;background:#404040;"></div>
<div class="a" style="left:1180px;top:893px;width:1px;height:23px;background:#8a8a8a;"></div>
<div class="a" style="left:1181px;top:893px;width:1px;height:23px;background:#404040;"></div>
<div class="a" style="left:1345px;top:893px;width:1px;height:23px;background:#8a8a8a;"></div>
<div class="a" style="left:1346px;top:893px;width:1px;height:23px;background:#404040;"></div>
<div class="t" style="left:886px;top:897.07px;font-size:13.5px;color:#f2f2f2;font-weight:normal;letter-spacing:-0.078px;">Модель</div>
<div class="t" style="left:949px;top:897.07px;font-size:13.5px;color:#c8c8c8;font-weight:normal;letter-spacing:0.108px;">Картограмма изм.2</div>
<div class="t" style="left:1086px;top:897.07px;font-size:13.5px;color:#c8c8c8;font-weight:normal;letter-spacing:0.163px;">Разбивочный</div>
<div class="t" style="left:1191px;top:897.07px;font-size:13.5px;color:#c8c8c8;font-weight:normal;letter-spacing:-0.094px;">Организация рельефа</div>
<div class="t" style="left:1352px;top:897.07px;font-size:13.5px;color:#c8c8c8;font-weight:normal;">Сети</div>
<div class="a" style="left:858px;top:249px;width:511px;height:562px;background:#0b4b6a;"></div>
<div class="a" style="left:859px;top:249px;width:509px;height:38px;background:#064b6d;"></div>
<div class="a" style="left:859px;top:286px;width:509px;height:1px;background:#5ab8e0;"></div>
<svg class="a" style="left:870px;top:259px;" width="19" height="18" viewBox="0 0 19 18"><rect x="7" y="1" width="11" height="11" fill="#3a3a3a" stroke="#d8d8d8" stroke-width="1.6"/><rect x="1" y="7" width="7" height="7" fill="#3a3a3a" stroke="#d8d8d8" stroke-width="1.6"/><rect x="7" y="12" width="9" height="5" fill="#3a3a3a" stroke="#d8d8d8" stroke-width="1.6"/></svg>
<div class="t" style="left:894px;top:261.30px;font-size:15px;color:#e6eef4;font-weight:normal;letter-spacing:-0.110px;">Редактор правил</div>
<div class="a" style="left:859px;top:287px;width:509px;height:35px;background:#f5f5f5;"></div>
<div class="t" style="left:879px;top:295.80px;font-size:15px;color:#111;font-weight:normal;letter-spacing:0.001px;">Список правил</div>
<div class="t" style="left:1008px;top:295.80px;font-size:15px;color:#111;font-weight:normal;letter-spacing:0.094px;">Помощь</div>
<div class="a" style="left:859px;top:322px;width:509px;height:488px;background:#f0f0f0;"></div>
<div class="a" style="left:864px;top:332px;width:195px;height:430px;border:1px solid #dcdcdc;"></div>
<div class="a" style="left:872px;top:330px;width:65px;height:5px;background:#f0f0f0;"></div>
<div class="a" style="left:1064px;top:332px;width:191px;height:430px;border:1px solid #dcdcdc;"></div>
<div class="a" style="left:1072px;top:330px;width:85px;height:5px;background:#f0f0f0;"></div>
<div class="t" style="left:875px;top:326.23px;font-size:14.5px;color:#111;font-weight:normal;letter-spacing:0.016px;">Правила</div>
<div class="t" style="left:1075px;top:326.23px;font-size:14.5px;color:#111;font-weight:normal;letter-spacing:0.189px;">Параметры</div>
<div class="a" style="left:873px;top:353px;width:26px;height:30px;background:#e2e2e2;"></div>
<div class="a" style="left:873px;top:353px;width:26px;height:30px;border:1px solid #1a7fd0;border-width:2px"></div>
<svg class="a" style="left:878px;top:360px;" width="16" height="16" viewBox="0 0 16 16"><path d="M8 2 V14 M2 8 H14" stroke="#1f5a9a" stroke-width="3.5"/></svg>
<div class="a" style="left:875px;top:356px;width:22px;height:24px;background:#ffffff;opacity:0.0"></div>
<div class="a" style="left:909px;top:353px;width:26px;height:30px;background:#e1e1e1;"></div>
<div class="a" style="left:909px;top:353px;width:26px;height:30px;border:1px solid #adadad;"></div>
<svg class="a" style="left:913px;top:360px;" width="18" height="16" viewBox="0 0 18 16"><rect x="0" y="0" width="18" height="16" fill="#f4f4f4"/><path d="M3 2 L15 14 M15 2 L3 14" stroke="#d8262c" stroke-width="3"/></svg>
<div class="a" style="left:945px;top:353px;width:26px;height:30px;background:#e1e1e1;"></div>
<div class="a" style="left:945px;top:353px;width:26px;height:30px;border:1px solid #adadad;"></div>
<svg class="a" style="left:949px;top:360px;" width="18" height="17" viewBox="0 0 18 17"><rect x="0" y="0" width="18" height="17" fill="#f4f4f4"/><rect x="2" y="2" width="8" height="8" fill="#bcd4ee" stroke="#6a8ab8" stroke-width="0.8"/><rect x="8" y="8" width="8" height="8" fill="#bcd4ee" stroke="#6a8ab8" stroke-width="0.8"/><path d="M9 5 V13 M5 9 H13" stroke="#2a6ab0" stroke-width="1" stroke-dasharray="1 1"/></svg>
<div class="a" style="left:980px;top:352px;width:35px;height:28px;background:#ffffff;"></div>
<div class="a" style="left:980px;top:352px;width:35px;height:28px;border:1px solid #7a7a7a;"></div>
<div class="a" style="left:981px;top:353px;width:33px;height:26px;overflow:hidden">
<div class="t" style="left:2px;top:6.80px;font-size:15px;color:#111;font-weight:normal;">31241000</div>
</div>
<div class="a" style="left:1024px;top:353px;width:26px;height:30px;background:#e1e1e1;"></div>
<div class="a" style="left:1024px;top:353px;width:26px;height:30px;border:1px solid #cfcfcf;"></div>
<div class="t" style="left:1032px;top:361.30px;font-size:15px;color:#222;font-weight:normal;">3</div>
<div class="a" style="left:872px;top:394px;width:143px;height:359px;background:#ffffff;"></div>
<div class="a" style="left:872px;top:394px;width:143px;height:359px;border:1px solid #828282;"></div>
<div class="a" style="left:873px;top:395px;width:141px;height:336px;overflow:hidden">
<svg class="a" style="left:-4px;top:8px" width="11" height="11" viewBox="0 0 11 11"><defs><linearGradient id="bx2" x1="0" y1="0" x2="0" y2="1"><stop offset="0" stop-color="#fff"/><stop offset="0.5" stop-color="#f4f4f8"/><stop offset="0.55" stop-color="#e2e2ea"/><stop offset="1" stop-color="#e6e6ec"/></linearGradient></defs><rect x="0.5" y="0.5" width="10" height="10" rx="1.5" fill="url(#bx2)" stroke="#8a8a8a"/><path d="M2.5 5.5 H8.5" stroke="#3a3a7a" stroke-width="1.2"/></svg>
<div class="a" style="left:1px;top:19px;width:1px;height:6px;background:repeating-linear-gradient(to bottom,#7c7c7c 0 1px,transparent 1px 2px)"></div>
<div class="a" style="left:20px;top:19px;width:1px;height:11px;background:repeating-linear-gradient(to bottom,#7c7c7c 0 1px,transparent 1px 2px)"></div>
<svg class="a" style="left:15px;top:30px" width="11" height="11" viewBox="0 0 11 11"><defs><linearGradient id="bx2" x1="0" y1="0" x2="0" y2="1"><stop offset="0" stop-color="#fff"/><stop offset="0.5" stop-color="#f4f4f8"/><stop offset="0.55" stop-color="#e2e2ea"/><stop offset="1" stop-color="#e6e6ec"/></linearGradient></defs><rect x="0.5" y="0.5" width="10" height="10" rx="1.5" fill="url(#bx2)" stroke="#8a8a8a"/><path d="M2.5 5.5 H8.5" stroke="#3a3a7a" stroke-width="1.2"/></svg>
<div class="a" style="left:26px;top:35px;width:4px;height:1px;background:repeating-linear-gradient(to right,#7c7c7c 0 1px,transparent 1px 2px)"></div>
<div class="a" style="left:39px;top:41px;width:1px;height:11px;background:repeating-linear-gradient(to bottom,#7c7c7c 0 1px,transparent 1px 2px)"></div>
<svg class="a" style="left:34px;top:52px" width="11" height="11" viewBox="0 0 11 11"><defs><linearGradient id="bx2" x1="0" y1="0" x2="0" y2="1"><stop offset="0" stop-color="#fff"/><stop offset="0.5" stop-color="#f4f4f8"/><stop offset="0.55" stop-color="#e2e2ea"/><stop offset="1" stop-color="#e6e6ec"/></linearGradient></defs><rect x="0.5" y="0.5" width="10" height="10" rx="1.5" fill="url(#bx2)" stroke="#8a8a8a"/><path d="M2.5 5.5 H8.5" stroke="#3a3a7a" stroke-width="1.2"/></svg>
<div class="a" style="left:45px;top:57px;width:4px;height:1px;background:repeating-linear-gradient(to right,#7c7c7c 0 1px,transparent 1px 2px)"></div>
<div class="a" style="left:58px;top:63px;width:1px;height:11px;background:repeating-linear-gradient(to bottom,#7c7c7c 0 1px,transparent 1px 2px)"></div>
<svg class="a" style="left:53px;top:74px" width="11" height="11" viewBox="0 0 11 11"><defs><linearGradient id="bx2" x1="0" y1="0" x2="0" y2="1"><stop offset="0" stop-color="#fff"/><stop offset="0.5" stop-color="#f4f4f8"/><stop offset="0.55" stop-color="#e2e2ea"/><stop offset="1" stop-color="#e6e6ec"/></linearGradient></defs><rect x="0.5" y="0.5" width="10" height="10" rx="1.5" fill="url(#bx2)" stroke="#8a8a8a"/><path d="M2.5 5.5 H8.5" stroke="#3a3a7a" stroke-width="1.2"/></svg>
<div class="a" style="left:64px;top:79px;width:4px;height:1px;background:repeating-linear-gradient(to right,#7c7c7c 0 1px,transparent 1px 2px)"></div>
<div class="a" style="left:58px;top:85px;width:1px;height:59px;background:repeating-linear-gradient(to bottom,#7c7c7c 0 1px,transparent 1px 2px)"></div>
<div class="a" style="left:58px;top:144px;width:10px;height:1px;background:repeating-linear-gradient(to right,#7c7c7c 0 1px,transparent 1px 2px)"></div>
<div class="a" style="left:77px;top:85px;width:1px;height:37px;background:repeating-linear-gradient(to bottom,#7c7c7c 0 1px,transparent 1px 2px)"></div>
<div class="a" style="left:77px;top:100px;width:10px;height:1px;background:repeating-linear-gradient(to right,#7c7c7c 0 1px,transparent 1px 2px)"></div>
<div class="a" style="left:77px;top:122px;width:10px;height:1px;background:repeating-linear-gradient(to right,#7c7c7c 0 1px,transparent 1px 2px)"></div>
<div class="t" style="left:32px;top:26.47px;font-size:14.8px;color:#111;font-weight:normal;letter-spacing:0.25px;">Графическое правило</div>
<div class="t" style="left:51.5px;top:47.97px;font-size:14.8px;color:#111;font-weight:normal;letter-spacing:0.25px;">Осевая линия</div>
<div class="t" style="left:70.5px;top:69.97px;font-size:14.8px;color:#111;font-weight:normal;letter-spacing:0.25px;">Значок sht</div>
<div class="t" style="left:89px;top:91.47px;font-size:14.8px;color:#111;font-weight:normal;letter-spacing:0.25px;">Ширина</div>
<div class="t" style="left:89px;top:113.47px;font-size:14.8px;color:#111;font-weight:normal;letter-spacing:0.25px;">Отрезок</div>
<div class="t" style="left:70px;top:135.47px;font-size:14.8px;color:#111;font-weight:normal;letter-spacing:0.25px;">Отрезок, 1</div>
</div>
<div class="a" style="left:873px;top:731px;width:141px;height:21px;background:#f0f0f0;"></div>
<div class="a" style="left:898px;top:731px;width:44px;height:20px;background:#cdcdcd;"></div>
<svg class="a" style="left:879px;top:736px;" width="8" height="11" viewBox="0 0 8 11"><path d="M6 1 L1.5 5.5 L6 10" stroke="#555" stroke-width="1.6" fill="none"/></svg>
<svg class="a" style="left:998px;top:736px;" width="8" height="11" viewBox="0 0 8 11"><path d="M2 1 L6.5 5.5 L2 10" stroke="#555" stroke-width="1.6" fill="none"/></svg>
<div class="a" style="left:1024px;top:537px;width:26px;height:30px;background:#d4d4d4;"></div>
<div class="a" style="left:1028px;top:542px;width:18px;height:19px;background:#e4e4e4;"></div>
<div class="a" style="left:1024px;top:579px;width:26px;height:30px;background:#d4d4d4;"></div>
<div class="a" style="left:1028px;top:584px;width:18px;height:19px;background:#e4e4e4;"></div>
<svg class="a" style="left:1030px;top:543px;" width="14" height="18" viewBox="0 0 14 18"><path d="M7 2 L12 8 H9 V16 H5 V8 H2 Z" fill="#d0d0d0" stroke="#a0a0a0" stroke-width="1"/></svg>
<svg class="a" style="left:1030px;top:585px;" width="14" height="18" viewBox="0 0 14 18"><path d="M7 16 L12 10 H9 V2 H5 V10 H2 Z" fill="#d0d0d0" stroke="#a0a0a0" stroke-width="1"/></svg>
<div class="a" style="left:1070px;top:349px;width:29px;height:25px;background:#cce4f7;"></div>
<div class="a" style="left:1070px;top:349px;width:29px;height:25px;border:1px solid #3d9ee0;"></div>
<svg class="a" style="left:1075px;top:354px;" width="19" height="16" viewBox="0 0 19 16"><rect x="0.5" y="0.5" width="5" height="5" fill="#fff" stroke="#222" stroke-width="1.2"/><rect x="0.5" y="9.5" width="5" height="5" fill="#fff" stroke="#222" stroke-width="1.2"/><path d="M8 1.5 H17 M8 4.5 H17 M8 10.5 H17 M8 13.5 H17" stroke="#333" stroke-width="1.3" stroke-dasharray="3 1"/></svg>
<svg class="a" style="left:1105px;top:354px;" width="19" height="18" viewBox="0 0 19 18"><rect x="0" y="0" width="9" height="8" fill="#444"/><text x="4.5" y="7.5" font-family="Liberation Sans" font-weight="bold" font-size="8" fill="#fff" text-anchor="middle">A</text><path d="M1 10.5 H7.5 L1 16.5 H8" stroke="#333" stroke-width="1.8" fill="none"/><path d="M14 1 V15 M10 11 L14 16 L18 11" stroke="#1a6ac0" stroke-width="2.2" fill="none"/></svg>
<div class="a" style="left:1130px;top:350px;width:1px;height:24px;background:#a0a0a0;"></div>
<svg class="a" style="left:1140px;top:355px;" width="18" height="16" viewBox="0 0 18 16"><rect x="0.5" y="0.5" width="17" height="15" fill="none" stroke="#c0c0c0" stroke-width="1.2"/><rect x="0.5" y="0.5" width="17" height="4" fill="#c8c8c8"/><rect x="3" y="8" width="7" height="6" fill="none" stroke="#c0c0c0"/></svg>
<div class="a" style="left:1068px;top:377px;width:183px;height:303px;background:#ffffff;"></div>
<div class="a" style="left:1068px;top:377px;width:183px;height:303px;border:1px solid #a0a0a0;"></div>
<div class="a" style="left:1069px;top:378px;width:181px;height:23px;background:#f0f0f8;"></div>
<div class="a" style="left:1069px;top:401px;width:26px;height:70px;background:#f0f0f8;"></div>
<div class="a" style="left:1095px;top:423px;width:155px;height:1px;background:#f0f0f0;"></div>
<div class="a" style="left:1095px;top:447px;width:155px;height:1px;background:#f0f0f0;"></div>
<div class="a" style="left:1095px;top:470px;width:155px;height:1px;background:#f0f0f0;"></div>
<div class="a" style="left:1152px;top:401px;width:1px;height:70px;background:#f0f0f0;"></div>
<svg class="a" style="left:1076px;top:386px;" width="11" height="8" viewBox="0 0 11 8"><path d="M1 1 L5.5 6 L10 1" stroke="#333" stroke-width="1.6" fill="none"/></svg>
<div class="t" style="left:1098.7px;top:382.30px;font-size:15px;color:#111;font-weight:bold;">Правило</div>
<div class="a" style="left:1096px;top:401px;width:56px;height:70px;overflow:hidden">
<div class="t" style="left:6.5px;top:27.90px;font-size:15px;color:#111;font-weight:normal;">Описание</div>
<div class="t" style="left:2px;top:50.30px;font-size:15px;color:#111;font-weight:normal;">Графическое правило</div>
</div>
<div class="a" style="left:1153px;top:401px;width:96px;height:70px;overflow:hidden">
<div class="t" style="left:6.5px;top:5.23px;font-size:14.5px;color:#111;font-weight:bold;">31241000</div>
<div class="t" style="left:4.5px;top:28.33px;font-size:14.5px;color:#111;font-weight:bold;">Берега обрывистые</div>
<div class="t" style="left:5px;top:50.73px;font-size:14.5px;color:#111;font-weight:bold;">(Collection)</div>
</div>
<div class="a" style="left:1068px;top:684px;width:183px;height:74px;background:#f0f0f0;"></div>
<div class="a" style="left:1068px;top:684px;width:183px;height:74px;border:1px solid #a8a8a8;"></div>
<div class="t" style="left:1079px;top:691.65px;font-size:14px;color:#111;font-weight:bold;letter-spacing:0.363px;">Название</div>
<div class="t" style="left:1074px;top:713.10px;font-size:15px;color:#111;font-weight:normal;letter-spacing:0.034px;">Название правила</div>
<div class="t" style="left:1074px;top:732.70px;font-size:15px;color:#111;font-weight:normal;letter-spacing:0.188px;">построения линии</div>
<div class="a" style="left:1260px;top:322px;width:116px;height:441px;background:#2a2a2a;"></div>
<div class="a" style="left:1368px;top:249px;width:8px;height:73px;background:#2a2a2a;"></div>
<div class="a" style="left:1375px;top:249px;width:1px;height:38px;background:#064b6d;"></div>
<div class="a" style="left:1375px;top:287px;width:1px;height:35px;background:#f5f5f5;"></div>
<div class="a" style="left:1368px;top:763px;width:8px;height:48px;background:#2a2a2a;"></div>
<div class="a" style="left:1375px;top:763px;width:1px;height:47px;background:#f0f0f0;"></div>
<div class="a" style="left:1295px;top:774px;width:73px;height:30px;background:#e1e1e1;"></div>
<div class="a" style="left:1295px;top:774px;width:74px;height:30px;border:1px solid #adadad;border-right:none"></div>
<div class="t" style="left:1346.5px;top:781.30px;font-size:15px;color:#111;font-weight:normal;">OK</div>
<div class="a" style="left:879px;top:396px;width:299px;height:24px;background:rgba(0,0,0,0.18);filter:blur(1.5px)"></div>
<div class="a" style="left:877px;top:394px;width:299px;height:24px;background:#ffffff;"></div>
<div class="a" style="left:877px;top:394px;width:299px;height:24px;border:1px solid #767676;"></div>
<div class="t" style="left:883px;top:399.30px;font-size:15px;color:#575757;font-weight:normal;letter-spacing:-0.077px;">Берега обрывистые с пляжем (31241000)</div>
<svg class="a" style="left:1338px;top:494px;" width="38" height="141" viewBox="0 0 38 141"><path d="M38 1.5 H1.5 V139.5 H38" stroke="#e8e8e8" stroke-width="1.2" fill="none"/></svg>
</body></html>
